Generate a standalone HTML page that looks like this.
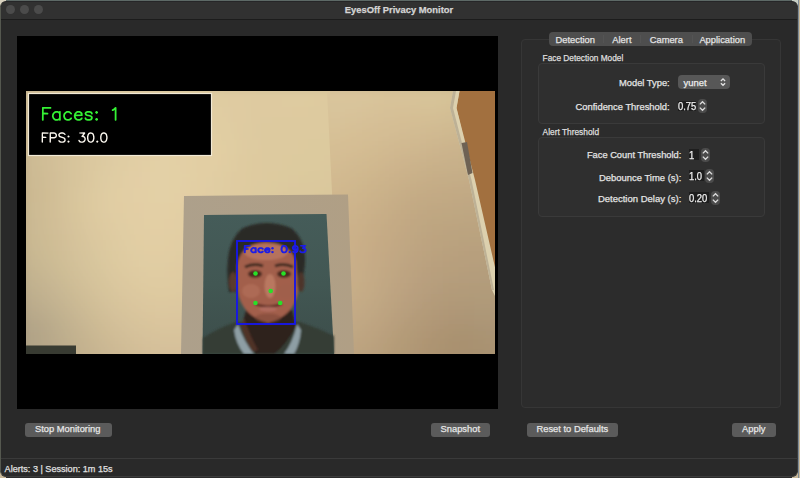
<!DOCTYPE html>
<html><head><meta charset="utf-8">
<style>
*{margin:0;padding:0;box-sizing:border-box}
html,body{width:800px;height:478px;overflow:hidden;background:#2b2b2b;font-family:"Liberation Sans",sans-serif;}
.abs{position:absolute}
.t{position:absolute;white-space:nowrap;line-height:normal;color:#e3e3e3;-webkit-text-stroke:0.25px currentColor}
.r{text-align:right}
#topline{position:absolute;left:0;top:0;width:800px;height:1px;background:#5d6966}
#rc1{position:absolute;left:798px;top:0;width:1px;height:478px;background:#7c8a96}
#rc2{position:absolute;left:799px;top:0;width:1px;height:478px;background:#c9b99a}
.corner{position:absolute;width:6px;height:6px;background:#d9d2bf}
#win{position:absolute;left:0;top:1px;width:798px;height:476px;background:#292929;border-radius:6px;overflow:hidden;border:1px solid #3c3c3c;border-top-color:#262628;border-left-color:#55584f}
#title{position:absolute;left:0;top:0;width:798px;height:18px;background:#313131;border-bottom:1px solid #1c1c1c}
.tl{position:absolute;top:3px;width:9px;height:9px;border-radius:50%;background:#4b4b4b}
#video{position:absolute;left:17px;top:36px;width:481px;height:373px;background:#000}
#cam{position:absolute;left:26px;top:91px;width:469px;height:263px}
.btn{position:absolute;height:14px;background:#5b5b5b;border-radius:3px}
#pane{position:absolute;left:521px;top:39px;width:260px;height:369px;border:1px solid #363636;background:#2c2c2c;border-radius:4px}
#seg{position:absolute;left:549px;top:32px;width:203px;height:14px;background:#4e4e4e;border-radius:4px}
.sep{position:absolute;top:3px;width:1px;height:8px;background:#545454}
.gbox{position:absolute;border:1px solid #3a3a3a;background:#2f2f2f;border-radius:4px}
.fld{position:absolute;background:#1e1e1e}
.spin{position:absolute;width:9px;height:14px;background:#4b4b4b;border-radius:4px}
.spin svg{position:absolute;left:0;top:0}
#status{position:absolute;left:1px;top:458px;width:797px;height:1px;background:#3a3a3a}
</style></head><body>
<div id="topline"></div><div id="rc1"></div><div id="rc2"></div>
<div class="corner" style="left:0;top:0"></div><div class="corner" style="left:792px;top:0;background:#c8cfc6"></div><div class="corner" style="left:0;top:472px;background:#c9b99a"></div><div class="corner" style="left:792px;top:472px;background:#c9b99a"></div>
<div id="win">
  <div id="title">
    <div class="tl" style="left:5px"></div>
    <div class="tl" style="left:19px"></div>
    <div class="tl" style="left:33px"></div>
  </div>
</div>
<div class="t" style="left:0;width:798px;text-align:center;top:3.6px;font-size:9.4px;font-weight:bold;color:#d4d4d4">EyesOff Privacy Monitor</div>
<div id="video"></div>
<svg id="cam" width="469" height="263" viewBox="26 91 469 263">
  <defs>
    <linearGradient id="mat" x1="182" y1="0" x2="353" y2="0" gradientUnits="userSpaceOnUse">
      <stop offset="0" stop-color="#ada08b"/>
      <stop offset="1" stop-color="#b09f85"/>
    </linearGradient>
    <linearGradient id="teal" x1="0" y1="214" x2="0" y2="354" gradientUnits="userSpaceOnUse">
      <stop offset="0" stop-color="#455c59"/>
      <stop offset="0.5" stop-color="#425753"/>
      <stop offset="1" stop-color="#3c4d4a"/>
    </linearGradient>
    <filter id="blw" x="-5%" y="-5%" width="110%" height="110%"><feGaussianBlur stdDeviation="9"/></filter>
    <filter id="bl1" x="-20%" y="-20%" width="140%" height="140%"><feGaussianBlur stdDeviation="1.3"/></filter>
  </defs>
  <clipPath id="clipL"><polygon points="26,91 330,91 343,354 26,354"/></clipPath>
  <clipPath id="clipR"><polygon points="327,91 495,91 495,354 340,354"/></clipPath>
  <g clip-path="url(#clipL)"><g filter="url(#blw)"><rect x="10" y="75" width="16" height="16" fill="#cebc96"/><rect x="26" y="75" width="16" height="16" fill="#d0be97"/><rect x="42" y="75" width="16" height="16" fill="#d2c099"/><rect x="58" y="75" width="16" height="16" fill="#d5c29b"/><rect x="74" y="75" width="16" height="16" fill="#d7c59d"/><rect x="90" y="75" width="16" height="16" fill="#d9c79e"/><rect x="106" y="75" width="16" height="16" fill="#dbc8a0"/><rect x="122" y="75" width="16" height="16" fill="#ddcaa1"/><rect x="138" y="75" width="16" height="16" fill="#decba2"/><rect x="154" y="75" width="16" height="16" fill="#dfcca2"/><rect x="170" y="75" width="16" height="16" fill="#dfcca2"/><rect x="186" y="75" width="16" height="16" fill="#dfcca2"/><rect x="202" y="75" width="16" height="16" fill="#dfcca2"/><rect x="218" y="75" width="16" height="16" fill="#dfcba1"/><rect x="234" y="75" width="16" height="16" fill="#dfcba1"/><rect x="250" y="75" width="16" height="16" fill="#decba0"/><rect x="266" y="75" width="16" height="16" fill="#decba0"/><rect x="282" y="75" width="16" height="16" fill="#decba0"/><rect x="298" y="75" width="16" height="16" fill="#decba0"/><rect x="314" y="75" width="16" height="16" fill="#deca9f"/><rect x="330" y="75" width="16" height="16" fill="#deca9f"/><rect x="346" y="75" width="16" height="16" fill="#ddca9f"/><rect x="362" y="75" width="16" height="16" fill="#ddc99e"/><rect x="378" y="75" width="16" height="16" fill="#dcc99e"/><rect x="394" y="75" width="16" height="16" fill="#dcc99e"/><rect x="410" y="75" width="16" height="16" fill="#dcc89d"/><rect x="426" y="75" width="16" height="16" fill="#dbc89d"/><rect x="442" y="75" width="16" height="16" fill="#dbc89d"/><rect x="458" y="75" width="16" height="16" fill="#dbc79d"/><rect x="474" y="75" width="16" height="16" fill="#dbc79c"/><rect x="490" y="75" width="16" height="16" fill="#dac79c"/><rect x="506" y="75" width="16" height="16" fill="#dac79c"/><rect x="10" y="91" width="16" height="16" fill="#cdbb95"/><rect x="26" y="91" width="16" height="16" fill="#cfbd97"/><rect x="42" y="91" width="16" height="16" fill="#d2c099"/><rect x="58" y="91" width="16" height="16" fill="#d5c29b"/><rect x="74" y="91" width="16" height="16" fill="#d7c59d"/><rect x="90" y="91" width="16" height="16" fill="#dac79f"/><rect x="106" y="91" width="16" height="16" fill="#dcc9a1"/><rect x="122" y="91" width="16" height="16" fill="#decba2"/><rect x="138" y="91" width="16" height="16" fill="#dfcca2"/><rect x="154" y="91" width="16" height="16" fill="#e0cda3"/><rect x="170" y="91" width="16" height="16" fill="#e0cda3"/><rect x="186" y="91" width="16" height="16" fill="#e0cda2"/><rect x="202" y="91" width="16" height="16" fill="#e0cca2"/><rect x="218" y="91" width="16" height="16" fill="#dfcca1"/><rect x="234" y="91" width="16" height="16" fill="#dfcba1"/><rect x="250" y="91" width="16" height="16" fill="#decaa0"/><rect x="266" y="91" width="16" height="16" fill="#decaa0"/><rect x="282" y="91" width="16" height="16" fill="#decba0"/><rect x="298" y="91" width="16" height="16" fill="#decba0"/><rect x="314" y="91" width="16" height="16" fill="#deca9f"/><rect x="330" y="91" width="16" height="16" fill="#ddca9f"/><rect x="346" y="91" width="16" height="16" fill="#ddca9e"/><rect x="362" y="91" width="16" height="16" fill="#ddc99e"/><rect x="378" y="91" width="16" height="16" fill="#dcc99e"/><rect x="394" y="91" width="16" height="16" fill="#dcc89d"/><rect x="410" y="91" width="16" height="16" fill="#dbc89d"/><rect x="426" y="91" width="16" height="16" fill="#dbc89d"/><rect x="442" y="91" width="16" height="16" fill="#dbc79d"/><rect x="458" y="91" width="16" height="16" fill="#dbc79c"/><rect x="474" y="91" width="16" height="16" fill="#dac79c"/><rect x="490" y="91" width="16" height="16" fill="#dac79c"/><rect x="506" y="91" width="16" height="16" fill="#dac69c"/><rect x="10" y="107" width="16" height="16" fill="#ccba94"/><rect x="26" y="107" width="16" height="16" fill="#cfbc96"/><rect x="42" y="107" width="16" height="16" fill="#d2bf98"/><rect x="58" y="107" width="16" height="16" fill="#d5c29b"/><rect x="74" y="107" width="16" height="16" fill="#d8c59d"/><rect x="90" y="107" width="16" height="16" fill="#dbc89f"/><rect x="106" y="107" width="16" height="16" fill="#ddcaa2"/><rect x="122" y="107" width="16" height="16" fill="#dfcca3"/><rect x="138" y="107" width="16" height="16" fill="#e0cda3"/><rect x="154" y="107" width="16" height="16" fill="#e0cda4"/><rect x="170" y="107" width="16" height="16" fill="#e1cea3"/><rect x="186" y="107" width="16" height="16" fill="#e1cea3"/><rect x="202" y="107" width="16" height="16" fill="#e0cda2"/><rect x="218" y="107" width="16" height="16" fill="#e0cca2"/><rect x="234" y="107" width="16" height="16" fill="#dfcba1"/><rect x="250" y="107" width="16" height="16" fill="#decaa0"/><rect x="266" y="107" width="16" height="16" fill="#decaa0"/><rect x="282" y="107" width="16" height="16" fill="#decaa0"/><rect x="298" y="107" width="16" height="16" fill="#deca9f"/><rect x="314" y="107" width="16" height="16" fill="#ddca9f"/><rect x="330" y="107" width="16" height="16" fill="#ddca9f"/><rect x="346" y="107" width="16" height="16" fill="#ddc99e"/><rect x="362" y="107" width="16" height="16" fill="#dcc99e"/><rect x="378" y="107" width="16" height="16" fill="#dcc99d"/><rect x="394" y="107" width="16" height="16" fill="#dbc89d"/><rect x="410" y="107" width="16" height="16" fill="#dbc89d"/><rect x="426" y="107" width="16" height="16" fill="#dbc79c"/><rect x="442" y="107" width="16" height="16" fill="#dac79c"/><rect x="458" y="107" width="16" height="16" fill="#dac79c"/><rect x="474" y="107" width="16" height="16" fill="#dac69c"/><rect x="490" y="107" width="16" height="16" fill="#dac69c"/><rect x="506" y="107" width="16" height="16" fill="#d9c69b"/><rect x="10" y="123" width="16" height="16" fill="#ccba94"/><rect x="26" y="123" width="16" height="16" fill="#cebc95"/><rect x="42" y="123" width="16" height="16" fill="#d1bf98"/><rect x="58" y="123" width="16" height="16" fill="#d5c29a"/><rect x="74" y="123" width="16" height="16" fill="#d8c59d"/><rect x="90" y="123" width="16" height="16" fill="#dbc8a0"/><rect x="106" y="123" width="16" height="16" fill="#decba2"/><rect x="122" y="123" width="16" height="16" fill="#e0cda3"/><rect x="138" y="123" width="16" height="16" fill="#e1cea4"/><rect x="154" y="123" width="16" height="16" fill="#e1cea4"/><rect x="170" y="123" width="16" height="16" fill="#e2cea4"/><rect x="186" y="123" width="16" height="16" fill="#e1cea4"/><rect x="202" y="123" width="16" height="16" fill="#e1cea3"/><rect x="218" y="123" width="16" height="16" fill="#e0cda2"/><rect x="234" y="123" width="16" height="16" fill="#dfcba1"/><rect x="250" y="123" width="16" height="16" fill="#ddcaa0"/><rect x="266" y="123" width="16" height="16" fill="#ddca9f"/><rect x="282" y="123" width="16" height="16" fill="#ddca9f"/><rect x="298" y="123" width="16" height="16" fill="#ddca9f"/><rect x="314" y="123" width="16" height="16" fill="#ddca9f"/><rect x="330" y="123" width="16" height="16" fill="#ddca9e"/><rect x="346" y="123" width="16" height="16" fill="#dcc99e"/><rect x="362" y="123" width="16" height="16" fill="#dcc99d"/><rect x="378" y="123" width="16" height="16" fill="#dbc89d"/><rect x="394" y="123" width="16" height="16" fill="#dbc89d"/><rect x="410" y="123" width="16" height="16" fill="#dac79c"/><rect x="426" y="123" width="16" height="16" fill="#dac79c"/><rect x="442" y="123" width="16" height="16" fill="#dac79c"/><rect x="458" y="123" width="16" height="16" fill="#dac69c"/><rect x="474" y="123" width="16" height="16" fill="#d9c69b"/><rect x="490" y="123" width="16" height="16" fill="#d9c69b"/><rect x="506" y="123" width="16" height="16" fill="#d9c59b"/><rect x="10" y="139" width="16" height="16" fill="#cbb993"/><rect x="26" y="139" width="16" height="16" fill="#cebb95"/><rect x="42" y="139" width="16" height="16" fill="#d1bf97"/><rect x="58" y="139" width="16" height="16" fill="#d5c29a"/><rect x="74" y="139" width="16" height="16" fill="#d8c59d"/><rect x="90" y="139" width="16" height="16" fill="#dcc9a0"/><rect x="106" y="139" width="16" height="16" fill="#decba2"/><rect x="122" y="139" width="16" height="16" fill="#e0cda4"/><rect x="138" y="139" width="16" height="16" fill="#e1cea5"/><rect x="154" y="139" width="16" height="16" fill="#e2cfa5"/><rect x="170" y="139" width="16" height="16" fill="#e2cfa5"/><rect x="186" y="139" width="16" height="16" fill="#e2cfa4"/><rect x="202" y="139" width="16" height="16" fill="#e2cfa3"/><rect x="218" y="139" width="16" height="16" fill="#e1cea2"/><rect x="234" y="139" width="16" height="16" fill="#dfcca1"/><rect x="250" y="139" width="16" height="16" fill="#decaa0"/><rect x="266" y="139" width="16" height="16" fill="#ddca9f"/><rect x="282" y="139" width="16" height="16" fill="#ddca9f"/><rect x="298" y="139" width="16" height="16" fill="#ddca9e"/><rect x="314" y="139" width="16" height="16" fill="#dcca9e"/><rect x="330" y="139" width="16" height="16" fill="#dcc99e"/><rect x="346" y="139" width="16" height="16" fill="#dbc99d"/><rect x="362" y="139" width="16" height="16" fill="#dbc89d"/><rect x="378" y="139" width="16" height="16" fill="#dbc89c"/><rect x="394" y="139" width="16" height="16" fill="#dac79c"/><rect x="410" y="139" width="16" height="16" fill="#dac79c"/><rect x="426" y="139" width="16" height="16" fill="#dac69c"/><rect x="442" y="139" width="16" height="16" fill="#d9c69b"/><rect x="458" y="139" width="16" height="16" fill="#d9c69b"/><rect x="474" y="139" width="16" height="16" fill="#d9c59b"/><rect x="490" y="139" width="16" height="16" fill="#d9c59b"/><rect x="506" y="139" width="16" height="16" fill="#d9c59b"/><rect x="10" y="155" width="16" height="16" fill="#cab892"/><rect x="26" y="155" width="16" height="16" fill="#cdbb94"/><rect x="42" y="155" width="16" height="16" fill="#d1be97"/><rect x="58" y="155" width="16" height="16" fill="#d5c29a"/><rect x="74" y="155" width="16" height="16" fill="#d9c69d"/><rect x="90" y="155" width="16" height="16" fill="#dcc9a0"/><rect x="106" y="155" width="16" height="16" fill="#dfcca3"/><rect x="122" y="155" width="16" height="16" fill="#e1cea4"/><rect x="138" y="155" width="16" height="16" fill="#e2cfa5"/><rect x="154" y="155" width="16" height="16" fill="#e3d0a6"/><rect x="170" y="155" width="16" height="16" fill="#e3cfa5"/><rect x="186" y="155" width="16" height="16" fill="#e2cfa4"/><rect x="202" y="155" width="16" height="16" fill="#e2cea3"/><rect x="218" y="155" width="16" height="16" fill="#e1cda2"/><rect x="234" y="155" width="16" height="16" fill="#dfcba0"/><rect x="250" y="155" width="16" height="16" fill="#deca9f"/><rect x="266" y="155" width="16" height="16" fill="#ddca9f"/><rect x="282" y="155" width="16" height="16" fill="#ddca9e"/><rect x="298" y="155" width="16" height="16" fill="#dcca9e"/><rect x="314" y="155" width="16" height="16" fill="#dcc99e"/><rect x="330" y="155" width="16" height="16" fill="#dbc99d"/><rect x="346" y="155" width="16" height="16" fill="#dbc89d"/><rect x="362" y="155" width="16" height="16" fill="#dac79c"/><rect x="378" y="155" width="16" height="16" fill="#dac79c"/><rect x="394" y="155" width="16" height="16" fill="#dac69c"/><rect x="410" y="155" width="16" height="16" fill="#d9c69b"/><rect x="426" y="155" width="16" height="16" fill="#d9c69b"/><rect x="442" y="155" width="16" height="16" fill="#d9c59b"/><rect x="458" y="155" width="16" height="16" fill="#d9c59b"/><rect x="474" y="155" width="16" height="16" fill="#d8c59b"/><rect x="490" y="155" width="16" height="16" fill="#d8c59a"/><rect x="506" y="155" width="16" height="16" fill="#d8c49a"/><rect x="10" y="171" width="16" height="16" fill="#cab791"/><rect x="26" y="171" width="16" height="16" fill="#ccba93"/><rect x="42" y="171" width="16" height="16" fill="#d0bd96"/><rect x="58" y="171" width="16" height="16" fill="#d5c29a"/><rect x="74" y="171" width="16" height="16" fill="#d9c69d"/><rect x="90" y="171" width="16" height="16" fill="#ddcaa1"/><rect x="106" y="171" width="16" height="16" fill="#e0cda3"/><rect x="122" y="171" width="16" height="16" fill="#e2cea5"/><rect x="138" y="171" width="16" height="16" fill="#e3cfa6"/><rect x="154" y="171" width="16" height="16" fill="#e3d0a6"/><rect x="170" y="171" width="16" height="16" fill="#e3d0a5"/><rect x="186" y="171" width="16" height="16" fill="#e2cfa4"/><rect x="202" y="171" width="16" height="16" fill="#e1cea3"/><rect x="218" y="171" width="16" height="16" fill="#e0cca1"/><rect x="234" y="171" width="16" height="16" fill="#dfcba0"/><rect x="250" y="171" width="16" height="16" fill="#deca9f"/><rect x="266" y="171" width="16" height="16" fill="#ddca9e"/><rect x="282" y="171" width="16" height="16" fill="#dcc99e"/><rect x="298" y="171" width="16" height="16" fill="#dbc99d"/><rect x="314" y="171" width="16" height="16" fill="#dbc99d"/><rect x="330" y="171" width="16" height="16" fill="#dac89c"/><rect x="346" y="171" width="16" height="16" fill="#dac79c"/><rect x="362" y="171" width="16" height="16" fill="#dac79c"/><rect x="378" y="171" width="16" height="16" fill="#d9c69b"/><rect x="394" y="171" width="16" height="16" fill="#d9c69b"/><rect x="410" y="171" width="16" height="16" fill="#d9c59b"/><rect x="426" y="171" width="16" height="16" fill="#d8c59b"/><rect x="442" y="171" width="16" height="16" fill="#d8c59a"/><rect x="458" y="171" width="16" height="16" fill="#d8c49a"/><rect x="474" y="171" width="16" height="16" fill="#d8c49a"/><rect x="490" y="171" width="16" height="16" fill="#d8c49a"/><rect x="506" y="171" width="16" height="16" fill="#d8c49a"/><rect x="10" y="187" width="16" height="16" fill="#c9b791"/><rect x="26" y="187" width="16" height="16" fill="#ccb992"/><rect x="42" y="187" width="16" height="16" fill="#d0bd95"/><rect x="58" y="187" width="16" height="16" fill="#d5c29a"/><rect x="74" y="187" width="16" height="16" fill="#dac79e"/><rect x="90" y="187" width="16" height="16" fill="#decba1"/><rect x="106" y="187" width="16" height="16" fill="#e1cda3"/><rect x="122" y="187" width="16" height="16" fill="#e2cfa5"/><rect x="138" y="187" width="16" height="16" fill="#e3cfa5"/><rect x="154" y="187" width="16" height="16" fill="#e3d0a6"/><rect x="170" y="187" width="16" height="16" fill="#e3cfa5"/><rect x="186" y="187" width="16" height="16" fill="#e2cea4"/><rect x="202" y="187" width="16" height="16" fill="#e1cda3"/><rect x="218" y="187" width="16" height="16" fill="#e0cca1"/><rect x="234" y="187" width="16" height="16" fill="#dfcba0"/><rect x="250" y="187" width="16" height="16" fill="#ddca9f"/><rect x="266" y="187" width="16" height="16" fill="#dcc99e"/><rect x="282" y="187" width="16" height="16" fill="#dbc89d"/><rect x="298" y="187" width="16" height="16" fill="#dbc89d"/><rect x="314" y="187" width="16" height="16" fill="#dac79c"/><rect x="330" y="187" width="16" height="16" fill="#d9c79c"/><rect x="346" y="187" width="16" height="16" fill="#d9c69b"/><rect x="362" y="187" width="16" height="16" fill="#d9c69b"/><rect x="378" y="187" width="16" height="16" fill="#d8c59b"/><rect x="394" y="187" width="16" height="16" fill="#d8c59a"/><rect x="410" y="187" width="16" height="16" fill="#d8c59a"/><rect x="426" y="187" width="16" height="16" fill="#d8c49a"/><rect x="442" y="187" width="16" height="16" fill="#d8c49a"/><rect x="458" y="187" width="16" height="16" fill="#d7c49a"/><rect x="474" y="187" width="16" height="16" fill="#d7c49a"/><rect x="490" y="187" width="16" height="16" fill="#d7c39a"/><rect x="506" y="187" width="16" height="16" fill="#d7c39a"/><rect x="10" y="203" width="16" height="16" fill="#c8b791"/><rect x="26" y="203" width="16" height="16" fill="#ccba93"/><rect x="42" y="203" width="16" height="16" fill="#d0bd96"/><rect x="58" y="203" width="16" height="16" fill="#d5c299"/><rect x="74" y="203" width="16" height="16" fill="#dac79d"/><rect x="90" y="203" width="16" height="16" fill="#decba1"/><rect x="106" y="203" width="16" height="16" fill="#e1cda3"/><rect x="122" y="203" width="16" height="16" fill="#e2cea4"/><rect x="138" y="203" width="16" height="16" fill="#e3cfa5"/><rect x="154" y="203" width="16" height="16" fill="#e3cfa5"/><rect x="170" y="203" width="16" height="16" fill="#e2cfa4"/><rect x="186" y="203" width="16" height="16" fill="#e2cea3"/><rect x="202" y="203" width="16" height="16" fill="#e1cda2"/><rect x="218" y="203" width="16" height="16" fill="#dfcba1"/><rect x="234" y="203" width="16" height="16" fill="#decaa0"/><rect x="250" y="203" width="16" height="16" fill="#dcc99e"/><rect x="266" y="203" width="16" height="16" fill="#dbc89d"/><rect x="282" y="203" width="16" height="16" fill="#dac79d"/><rect x="298" y="203" width="16" height="16" fill="#dac69c"/><rect x="314" y="203" width="16" height="16" fill="#d9c69b"/><rect x="330" y="203" width="16" height="16" fill="#d8c59b"/><rect x="346" y="203" width="16" height="16" fill="#d8c59b"/><rect x="362" y="203" width="16" height="16" fill="#d8c59a"/><rect x="378" y="203" width="16" height="16" fill="#d8c49a"/><rect x="394" y="203" width="16" height="16" fill="#d7c49a"/><rect x="410" y="203" width="16" height="16" fill="#d7c49a"/><rect x="426" y="203" width="16" height="16" fill="#d7c39a"/><rect x="442" y="203" width="16" height="16" fill="#d7c399"/><rect x="458" y="203" width="16" height="16" fill="#d7c399"/><rect x="474" y="203" width="16" height="16" fill="#d7c399"/><rect x="490" y="203" width="16" height="16" fill="#d7c399"/><rect x="506" y="203" width="16" height="16" fill="#d7c399"/><rect x="10" y="219" width="16" height="16" fill="#c8b690"/><rect x="26" y="219" width="16" height="16" fill="#cbb993"/><rect x="42" y="219" width="16" height="16" fill="#d0bd96"/><rect x="58" y="219" width="16" height="16" fill="#d4c199"/><rect x="74" y="219" width="16" height="16" fill="#d9c69d"/><rect x="90" y="219" width="16" height="16" fill="#ddc9a0"/><rect x="106" y="219" width="16" height="16" fill="#e0cca2"/><rect x="122" y="219" width="16" height="16" fill="#e1cea4"/><rect x="138" y="219" width="16" height="16" fill="#e2cfa4"/><rect x="154" y="219" width="16" height="16" fill="#e3cfa4"/><rect x="170" y="219" width="16" height="16" fill="#e2cea4"/><rect x="186" y="219" width="16" height="16" fill="#e1cda3"/><rect x="202" y="219" width="16" height="16" fill="#e0cca2"/><rect x="218" y="219" width="16" height="16" fill="#decaa0"/><rect x="234" y="219" width="16" height="16" fill="#ddc99f"/><rect x="250" y="219" width="16" height="16" fill="#dbc79e"/><rect x="266" y="219" width="16" height="16" fill="#dac69d"/><rect x="282" y="219" width="16" height="16" fill="#d9c59c"/><rect x="298" y="219" width="16" height="16" fill="#d8c59b"/><rect x="314" y="219" width="16" height="16" fill="#d8c49a"/><rect x="330" y="219" width="16" height="16" fill="#d7c49a"/><rect x="346" y="219" width="16" height="16" fill="#d7c49a"/><rect x="362" y="219" width="16" height="16" fill="#d7c399"/><rect x="378" y="219" width="16" height="16" fill="#d7c399"/><rect x="394" y="219" width="16" height="16" fill="#d6c399"/><rect x="410" y="219" width="16" height="16" fill="#d6c399"/><rect x="426" y="219" width="16" height="16" fill="#d6c399"/><rect x="442" y="219" width="16" height="16" fill="#d6c299"/><rect x="458" y="219" width="16" height="16" fill="#d6c299"/><rect x="474" y="219" width="16" height="16" fill="#d6c299"/><rect x="490" y="219" width="16" height="16" fill="#d6c299"/><rect x="506" y="219" width="16" height="16" fill="#d6c299"/><rect x="10" y="235" width="16" height="16" fill="#c6b590"/><rect x="26" y="235" width="16" height="16" fill="#cab992"/><rect x="42" y="235" width="16" height="16" fill="#cebc95"/><rect x="58" y="235" width="16" height="16" fill="#d3c098"/><rect x="74" y="235" width="16" height="16" fill="#d7c49c"/><rect x="90" y="235" width="16" height="16" fill="#dbc89f"/><rect x="106" y="235" width="16" height="16" fill="#decba1"/><rect x="122" y="235" width="16" height="16" fill="#e1cda3"/><rect x="138" y="235" width="16" height="16" fill="#e2cea4"/><rect x="154" y="235" width="16" height="16" fill="#e2cea4"/><rect x="170" y="235" width="16" height="16" fill="#e1cda3"/><rect x="186" y="235" width="16" height="16" fill="#e0cca2"/><rect x="202" y="235" width="16" height="16" fill="#dfcba1"/><rect x="218" y="235" width="16" height="16" fill="#ddc9a0"/><rect x="234" y="235" width="16" height="16" fill="#dcc79e"/><rect x="250" y="235" width="16" height="16" fill="#dac69d"/><rect x="266" y="235" width="16" height="16" fill="#d9c59c"/><rect x="282" y="235" width="16" height="16" fill="#d8c49b"/><rect x="298" y="235" width="16" height="16" fill="#d7c39a"/><rect x="314" y="235" width="16" height="16" fill="#d6c399"/><rect x="330" y="235" width="16" height="16" fill="#d6c299"/><rect x="346" y="235" width="16" height="16" fill="#d6c299"/><rect x="362" y="235" width="16" height="16" fill="#d6c299"/><rect x="378" y="235" width="16" height="16" fill="#d6c299"/><rect x="394" y="235" width="16" height="16" fill="#d6c298"/><rect x="410" y="235" width="16" height="16" fill="#d6c298"/><rect x="426" y="235" width="16" height="16" fill="#d5c298"/><rect x="442" y="235" width="16" height="16" fill="#d5c298"/><rect x="458" y="235" width="16" height="16" fill="#d5c298"/><rect x="474" y="235" width="16" height="16" fill="#d5c198"/><rect x="490" y="235" width="16" height="16" fill="#d5c198"/><rect x="506" y="235" width="16" height="16" fill="#d5c198"/><rect x="10" y="251" width="16" height="16" fill="#c4b38f"/><rect x="26" y="251" width="16" height="16" fill="#c8b791"/><rect x="42" y="251" width="16" height="16" fill="#ccbb94"/><rect x="58" y="251" width="16" height="16" fill="#d1bf97"/><rect x="74" y="251" width="16" height="16" fill="#d5c39b"/><rect x="90" y="251" width="16" height="16" fill="#d9c79e"/><rect x="106" y="251" width="16" height="16" fill="#ddcaa0"/><rect x="122" y="251" width="16" height="16" fill="#e0cca2"/><rect x="138" y="251" width="16" height="16" fill="#e1cea3"/><rect x="154" y="251" width="16" height="16" fill="#e1cda3"/><rect x="170" y="251" width="16" height="16" fill="#e1cca2"/><rect x="186" y="251" width="16" height="16" fill="#dfcba1"/><rect x="202" y="251" width="16" height="16" fill="#decaa0"/><rect x="218" y="251" width="16" height="16" fill="#dcc89f"/><rect x="234" y="251" width="16" height="16" fill="#dac69d"/><rect x="250" y="251" width="16" height="16" fill="#d8c49c"/><rect x="266" y="251" width="16" height="16" fill="#d7c39b"/><rect x="282" y="251" width="16" height="16" fill="#d6c299"/><rect x="298" y="251" width="16" height="16" fill="#d5c199"/><rect x="314" y="251" width="16" height="16" fill="#d5c198"/><rect x="330" y="251" width="16" height="16" fill="#d5c198"/><rect x="346" y="251" width="16" height="16" fill="#d5c198"/><rect x="362" y="251" width="16" height="16" fill="#d5c198"/><rect x="378" y="251" width="16" height="16" fill="#d5c198"/><rect x="394" y="251" width="16" height="16" fill="#d5c198"/><rect x="410" y="251" width="16" height="16" fill="#d5c198"/><rect x="426" y="251" width="16" height="16" fill="#d5c198"/><rect x="442" y="251" width="16" height="16" fill="#d5c198"/><rect x="458" y="251" width="16" height="16" fill="#d5c198"/><rect x="474" y="251" width="16" height="16" fill="#d5c198"/><rect x="490" y="251" width="16" height="16" fill="#d5c198"/><rect x="506" y="251" width="16" height="16" fill="#d5c198"/><rect x="10" y="267" width="16" height="16" fill="#c0b08e"/><rect x="26" y="267" width="16" height="16" fill="#c4b490"/><rect x="42" y="267" width="16" height="16" fill="#c9b893"/><rect x="58" y="267" width="16" height="16" fill="#cebd96"/><rect x="74" y="267" width="16" height="16" fill="#d3c199"/><rect x="90" y="267" width="16" height="16" fill="#d7c59c"/><rect x="106" y="267" width="16" height="16" fill="#dbc89f"/><rect x="122" y="267" width="16" height="16" fill="#decaa1"/><rect x="138" y="267" width="16" height="16" fill="#e0cca2"/><rect x="154" y="267" width="16" height="16" fill="#e0cca2"/><rect x="170" y="267" width="16" height="16" fill="#e0cba1"/><rect x="186" y="267" width="16" height="16" fill="#decaa0"/><rect x="202" y="267" width="16" height="16" fill="#ddc89f"/><rect x="218" y="267" width="16" height="16" fill="#dbc69e"/><rect x="234" y="267" width="16" height="16" fill="#d9c59c"/><rect x="250" y="267" width="16" height="16" fill="#d7c39b"/><rect x="266" y="267" width="16" height="16" fill="#d6c199"/><rect x="282" y="267" width="16" height="16" fill="#d5c098"/><rect x="298" y="267" width="16" height="16" fill="#d4bf97"/><rect x="314" y="267" width="16" height="16" fill="#d4bf97"/><rect x="330" y="267" width="16" height="16" fill="#d4bf97"/><rect x="346" y="267" width="16" height="16" fill="#d4bf97"/><rect x="362" y="267" width="16" height="16" fill="#d4bf97"/><rect x="378" y="267" width="16" height="16" fill="#d4bf97"/><rect x="394" y="267" width="16" height="16" fill="#d4c097"/><rect x="410" y="267" width="16" height="16" fill="#d4c097"/><rect x="426" y="267" width="16" height="16" fill="#d4c097"/><rect x="442" y="267" width="16" height="16" fill="#d4c097"/><rect x="458" y="267" width="16" height="16" fill="#d4c097"/><rect x="474" y="267" width="16" height="16" fill="#d4c097"/><rect x="490" y="267" width="16" height="16" fill="#d4c097"/><rect x="506" y="267" width="16" height="16" fill="#d4c097"/><rect x="10" y="283" width="16" height="16" fill="#bcad8c"/><rect x="26" y="283" width="16" height="16" fill="#c0b08e"/><rect x="42" y="283" width="16" height="16" fill="#c5b491"/><rect x="58" y="283" width="16" height="16" fill="#cab994"/><rect x="74" y="283" width="16" height="16" fill="#d0be97"/><rect x="90" y="283" width="16" height="16" fill="#d5c29a"/><rect x="106" y="283" width="16" height="16" fill="#d9c69d"/><rect x="122" y="283" width="16" height="16" fill="#dcc89f"/><rect x="138" y="283" width="16" height="16" fill="#decaa0"/><rect x="154" y="283" width="16" height="16" fill="#dfcaa0"/><rect x="170" y="283" width="16" height="16" fill="#decaa0"/><rect x="186" y="283" width="16" height="16" fill="#ddc89f"/><rect x="202" y="283" width="16" height="16" fill="#dcc79e"/><rect x="218" y="283" width="16" height="16" fill="#dac59d"/><rect x="234" y="283" width="16" height="16" fill="#d8c39b"/><rect x="250" y="283" width="16" height="16" fill="#d6c19a"/><rect x="266" y="283" width="16" height="16" fill="#d5bf98"/><rect x="282" y="283" width="16" height="16" fill="#d3be97"/><rect x="298" y="283" width="16" height="16" fill="#d2bd96"/><rect x="314" y="283" width="16" height="16" fill="#d2bd96"/><rect x="330" y="283" width="16" height="16" fill="#d2bd96"/><rect x="346" y="283" width="16" height="16" fill="#d3be96"/><rect x="362" y="283" width="16" height="16" fill="#d3be96"/><rect x="378" y="283" width="16" height="16" fill="#d3be96"/><rect x="394" y="283" width="16" height="16" fill="#d3bf97"/><rect x="410" y="283" width="16" height="16" fill="#d3bf97"/><rect x="426" y="283" width="16" height="16" fill="#d3bf97"/><rect x="442" y="283" width="16" height="16" fill="#d3bf97"/><rect x="458" y="283" width="16" height="16" fill="#d3bf97"/><rect x="474" y="283" width="16" height="16" fill="#d3bf97"/><rect x="490" y="283" width="16" height="16" fill="#d4bf97"/><rect x="506" y="283" width="16" height="16" fill="#d4bf97"/><rect x="10" y="299" width="16" height="16" fill="#b8a98a"/><rect x="26" y="299" width="16" height="16" fill="#bbab8c"/><rect x="42" y="299" width="16" height="16" fill="#c0b08f"/><rect x="58" y="299" width="16" height="16" fill="#c6b591"/><rect x="74" y="299" width="16" height="16" fill="#ccba95"/><rect x="90" y="299" width="16" height="16" fill="#d1bf98"/><rect x="106" y="299" width="16" height="16" fill="#d6c39b"/><rect x="122" y="299" width="16" height="16" fill="#dac59d"/><rect x="138" y="299" width="16" height="16" fill="#dbc79e"/><rect x="154" y="299" width="16" height="16" fill="#ddc89f"/><rect x="170" y="299" width="16" height="16" fill="#dcc79f"/><rect x="186" y="299" width="16" height="16" fill="#dbc69e"/><rect x="202" y="299" width="16" height="16" fill="#dac59d"/><rect x="218" y="299" width="16" height="16" fill="#d8c39b"/><rect x="234" y="299" width="16" height="16" fill="#d7c29a"/><rect x="250" y="299" width="16" height="16" fill="#d5c099"/><rect x="266" y="299" width="16" height="16" fill="#d3be97"/><rect x="282" y="299" width="16" height="16" fill="#d2bc96"/><rect x="298" y="299" width="16" height="16" fill="#d1bc95"/><rect x="314" y="299" width="16" height="16" fill="#d1bc95"/><rect x="330" y="299" width="16" height="16" fill="#d1bc95"/><rect x="346" y="299" width="16" height="16" fill="#d2bd96"/><rect x="362" y="299" width="16" height="16" fill="#d2bd96"/><rect x="378" y="299" width="16" height="16" fill="#d2bd96"/><rect x="394" y="299" width="16" height="16" fill="#d2be96"/><rect x="410" y="299" width="16" height="16" fill="#d2be96"/><rect x="426" y="299" width="16" height="16" fill="#d3be96"/><rect x="442" y="299" width="16" height="16" fill="#d3be96"/><rect x="458" y="299" width="16" height="16" fill="#d3be96"/><rect x="474" y="299" width="16" height="16" fill="#d3be96"/><rect x="490" y="299" width="16" height="16" fill="#d3bf97"/><rect x="506" y="299" width="16" height="16" fill="#d3bf97"/><rect x="10" y="315" width="16" height="16" fill="#b3a588"/><rect x="26" y="315" width="16" height="16" fill="#b4a588"/><rect x="42" y="315" width="16" height="16" fill="#baab8b"/><rect x="58" y="315" width="16" height="16" fill="#c1b18f"/><rect x="74" y="315" width="16" height="16" fill="#c8b692"/><rect x="90" y="315" width="16" height="16" fill="#cebb95"/><rect x="106" y="315" width="16" height="16" fill="#d3bf98"/><rect x="122" y="315" width="16" height="16" fill="#d6c29b"/><rect x="138" y="315" width="16" height="16" fill="#d9c49c"/><rect x="154" y="315" width="16" height="16" fill="#dac59d"/><rect x="170" y="315" width="16" height="16" fill="#dac59d"/><rect x="186" y="315" width="16" height="16" fill="#d9c49c"/><rect x="202" y="315" width="16" height="16" fill="#d8c39b"/><rect x="218" y="315" width="16" height="16" fill="#d7c29a"/><rect x="234" y="315" width="16" height="16" fill="#d5c099"/><rect x="250" y="315" width="16" height="16" fill="#d4bf98"/><rect x="266" y="315" width="16" height="16" fill="#d3bd97"/><rect x="282" y="315" width="16" height="16" fill="#d2bc96"/><rect x="298" y="315" width="16" height="16" fill="#d1bb95"/><rect x="314" y="315" width="16" height="16" fill="#d1bb95"/><rect x="330" y="315" width="16" height="16" fill="#d1bc95"/><rect x="346" y="315" width="16" height="16" fill="#d1bc95"/><rect x="362" y="315" width="16" height="16" fill="#d1bc95"/><rect x="378" y="315" width="16" height="16" fill="#d1bd95"/><rect x="394" y="315" width="16" height="16" fill="#d1bd95"/><rect x="410" y="315" width="16" height="16" fill="#d2bd96"/><rect x="426" y="315" width="16" height="16" fill="#d2bd96"/><rect x="442" y="315" width="16" height="16" fill="#d2bd96"/><rect x="458" y="315" width="16" height="16" fill="#d2be96"/><rect x="474" y="315" width="16" height="16" fill="#d2be96"/><rect x="490" y="315" width="16" height="16" fill="#d2be96"/><rect x="506" y="315" width="16" height="16" fill="#d2be96"/><rect x="10" y="331" width="16" height="16" fill="#b1a387"/><rect x="26" y="331" width="16" height="16" fill="#b1a387"/><rect x="42" y="331" width="16" height="16" fill="#b7a88a"/><rect x="58" y="331" width="16" height="16" fill="#beae8d"/><rect x="74" y="331" width="16" height="16" fill="#c5b38f"/><rect x="90" y="331" width="16" height="16" fill="#cab792"/><rect x="106" y="331" width="16" height="16" fill="#cfbb96"/><rect x="122" y="331" width="16" height="16" fill="#d3bf98"/><rect x="138" y="331" width="16" height="16" fill="#d6c19a"/><rect x="154" y="331" width="16" height="16" fill="#d7c29b"/><rect x="170" y="331" width="16" height="16" fill="#d7c29b"/><rect x="186" y="331" width="16" height="16" fill="#d7c29b"/><rect x="202" y="331" width="16" height="16" fill="#d6c19a"/><rect x="218" y="331" width="16" height="16" fill="#d5c099"/><rect x="234" y="331" width="16" height="16" fill="#d4bf98"/><rect x="250" y="331" width="16" height="16" fill="#d3be97"/><rect x="266" y="331" width="16" height="16" fill="#d2bc96"/><rect x="282" y="331" width="16" height="16" fill="#d1bc95"/><rect x="298" y="331" width="16" height="16" fill="#d0bb95"/><rect x="314" y="331" width="16" height="16" fill="#d0bb95"/><rect x="330" y="331" width="16" height="16" fill="#d0bb95"/><rect x="346" y="331" width="16" height="16" fill="#d0bb95"/><rect x="362" y="331" width="16" height="16" fill="#d0bb95"/><rect x="378" y="331" width="16" height="16" fill="#d1bc95"/><rect x="394" y="331" width="16" height="16" fill="#d1bc95"/><rect x="410" y="331" width="16" height="16" fill="#d1bc95"/><rect x="426" y="331" width="16" height="16" fill="#d1bd95"/><rect x="442" y="331" width="16" height="16" fill="#d1bd95"/><rect x="458" y="331" width="16" height="16" fill="#d1bd95"/><rect x="474" y="331" width="16" height="16" fill="#d2bd96"/><rect x="490" y="331" width="16" height="16" fill="#d2bd96"/><rect x="506" y="331" width="16" height="16" fill="#d2bd96"/><rect x="10" y="347" width="16" height="16" fill="#b1a387"/><rect x="26" y="347" width="16" height="16" fill="#b3a487"/><rect x="42" y="347" width="16" height="16" fill="#b7a889"/><rect x="58" y="347" width="16" height="16" fill="#bdac8c"/><rect x="74" y="347" width="16" height="16" fill="#c2b18e"/><rect x="90" y="347" width="16" height="16" fill="#c7b591"/><rect x="106" y="347" width="16" height="16" fill="#ccb894"/><rect x="122" y="347" width="16" height="16" fill="#d0bb96"/><rect x="138" y="347" width="16" height="16" fill="#d3be98"/><rect x="154" y="347" width="16" height="16" fill="#d4bf99"/><rect x="170" y="347" width="16" height="16" fill="#d5bf99"/><rect x="186" y="347" width="16" height="16" fill="#d5bf99"/><rect x="202" y="347" width="16" height="16" fill="#d4bf99"/><rect x="218" y="347" width="16" height="16" fill="#d4be98"/><rect x="234" y="347" width="16" height="16" fill="#d3bd97"/><rect x="250" y="347" width="16" height="16" fill="#d2bc96"/><rect x="266" y="347" width="16" height="16" fill="#d1bc96"/><rect x="282" y="347" width="16" height="16" fill="#d0bb95"/><rect x="298" y="347" width="16" height="16" fill="#d0bb95"/><rect x="314" y="347" width="16" height="16" fill="#d0ba94"/><rect x="330" y="347" width="16" height="16" fill="#d0ba94"/><rect x="346" y="347" width="16" height="16" fill="#d0bb94"/><rect x="362" y="347" width="16" height="16" fill="#d0bb94"/><rect x="378" y="347" width="16" height="16" fill="#d0bb94"/><rect x="394" y="347" width="16" height="16" fill="#d0bb95"/><rect x="410" y="347" width="16" height="16" fill="#d0bc95"/><rect x="426" y="347" width="16" height="16" fill="#d1bc95"/><rect x="442" y="347" width="16" height="16" fill="#d1bc95"/><rect x="458" y="347" width="16" height="16" fill="#d1bc95"/><rect x="474" y="347" width="16" height="16" fill="#d1bc95"/><rect x="490" y="347" width="16" height="16" fill="#d1bd95"/><rect x="506" y="347" width="16" height="16" fill="#d1bd95"/><rect x="10" y="363" width="16" height="16" fill="#b2a387"/><rect x="26" y="363" width="16" height="16" fill="#b4a588"/><rect x="42" y="363" width="16" height="16" fill="#b8a889"/><rect x="58" y="363" width="16" height="16" fill="#bcab8b"/><rect x="74" y="363" width="16" height="16" fill="#c1af8e"/><rect x="90" y="363" width="16" height="16" fill="#c5b390"/><rect x="106" y="363" width="16" height="16" fill="#c9b692"/><rect x="122" y="363" width="16" height="16" fill="#cdb994"/><rect x="138" y="363" width="16" height="16" fill="#cfbb96"/><rect x="154" y="363" width="16" height="16" fill="#d1bc97"/><rect x="170" y="363" width="16" height="16" fill="#d2bd97"/><rect x="186" y="363" width="16" height="16" fill="#d2bd97"/><rect x="202" y="363" width="16" height="16" fill="#d2bd97"/><rect x="218" y="363" width="16" height="16" fill="#d2bc97"/><rect x="234" y="363" width="16" height="16" fill="#d1bc96"/><rect x="250" y="363" width="16" height="16" fill="#d1bb96"/><rect x="266" y="363" width="16" height="16" fill="#d0bb95"/><rect x="282" y="363" width="16" height="16" fill="#d0ba95"/><rect x="298" y="363" width="16" height="16" fill="#cfba94"/><rect x="314" y="363" width="16" height="16" fill="#cfba94"/><rect x="330" y="363" width="16" height="16" fill="#cfba94"/><rect x="346" y="363" width="16" height="16" fill="#cfba94"/><rect x="362" y="363" width="16" height="16" fill="#cfba94"/><rect x="378" y="363" width="16" height="16" fill="#cfba94"/><rect x="394" y="363" width="16" height="16" fill="#d0bb94"/><rect x="410" y="363" width="16" height="16" fill="#d0bb94"/><rect x="426" y="363" width="16" height="16" fill="#d0bb94"/><rect x="442" y="363" width="16" height="16" fill="#d0bb95"/><rect x="458" y="363" width="16" height="16" fill="#d0bc95"/><rect x="474" y="363" width="16" height="16" fill="#d0bc95"/><rect x="490" y="363" width="16" height="16" fill="#d1bc95"/><rect x="506" y="363" width="16" height="16" fill="#d1bc95"/></g></g>
  <g clip-path="url(#clipR)"><g filter="url(#blw)"><rect x="10" y="75" width="16" height="16" fill="#d8c298"/><rect x="26" y="75" width="16" height="16" fill="#d8c298"/><rect x="42" y="75" width="16" height="16" fill="#d8c299"/><rect x="58" y="75" width="16" height="16" fill="#d8c299"/><rect x="74" y="75" width="16" height="16" fill="#d8c399"/><rect x="90" y="75" width="16" height="16" fill="#d9c399"/><rect x="106" y="75" width="16" height="16" fill="#d9c399"/><rect x="122" y="75" width="16" height="16" fill="#d9c399"/><rect x="138" y="75" width="16" height="16" fill="#d9c399"/><rect x="154" y="75" width="16" height="16" fill="#d9c39a"/><rect x="170" y="75" width="16" height="16" fill="#d9c49a"/><rect x="186" y="75" width="16" height="16" fill="#d9c49a"/><rect x="202" y="75" width="16" height="16" fill="#dac49a"/><rect x="218" y="75" width="16" height="16" fill="#dac49a"/><rect x="234" y="75" width="16" height="16" fill="#dac59b"/><rect x="250" y="75" width="16" height="16" fill="#dac59b"/><rect x="266" y="75" width="16" height="16" fill="#dac59b"/><rect x="282" y="75" width="16" height="16" fill="#dac59c"/><rect x="298" y="75" width="16" height="16" fill="#dac59c"/><rect x="314" y="75" width="16" height="16" fill="#dac69c"/><rect x="330" y="75" width="16" height="16" fill="#dac69d"/><rect x="346" y="75" width="16" height="16" fill="#dac69c"/><rect x="362" y="75" width="16" height="16" fill="#dac59c"/><rect x="378" y="75" width="16" height="16" fill="#d9c59b"/><rect x="394" y="75" width="16" height="16" fill="#d9c59b"/><rect x="410" y="75" width="16" height="16" fill="#d9c59a"/><rect x="426" y="75" width="16" height="16" fill="#d8c59a"/><rect x="442" y="75" width="16" height="16" fill="#d6c398"/><rect x="458" y="75" width="16" height="16" fill="#d4c197"/><rect x="474" y="75" width="16" height="16" fill="#d2bf95"/><rect x="490" y="75" width="16" height="16" fill="#d1bd94"/><rect x="506" y="75" width="16" height="16" fill="#cfbb92"/><rect x="10" y="91" width="16" height="16" fill="#d7c198"/><rect x="26" y="91" width="16" height="16" fill="#d8c198"/><rect x="42" y="91" width="16" height="16" fill="#d8c198"/><rect x="58" y="91" width="16" height="16" fill="#d8c298"/><rect x="74" y="91" width="16" height="16" fill="#d8c298"/><rect x="90" y="91" width="16" height="16" fill="#d8c298"/><rect x="106" y="91" width="16" height="16" fill="#d8c298"/><rect x="122" y="91" width="16" height="16" fill="#d8c299"/><rect x="138" y="91" width="16" height="16" fill="#d8c299"/><rect x="154" y="91" width="16" height="16" fill="#d9c399"/><rect x="170" y="91" width="16" height="16" fill="#d9c399"/><rect x="186" y="91" width="16" height="16" fill="#d9c399"/><rect x="202" y="91" width="16" height="16" fill="#d9c399"/><rect x="218" y="91" width="16" height="16" fill="#d9c39a"/><rect x="234" y="91" width="16" height="16" fill="#d9c39a"/><rect x="250" y="91" width="16" height="16" fill="#d9c49a"/><rect x="266" y="91" width="16" height="16" fill="#d9c49a"/><rect x="282" y="91" width="16" height="16" fill="#d9c49a"/><rect x="298" y="91" width="16" height="16" fill="#d9c49b"/><rect x="314" y="91" width="16" height="16" fill="#d9c49b"/><rect x="330" y="91" width="16" height="16" fill="#d9c59c"/><rect x="346" y="91" width="16" height="16" fill="#d9c59c"/><rect x="362" y="91" width="16" height="16" fill="#d9c49a"/><rect x="378" y="91" width="16" height="16" fill="#d8c399"/><rect x="394" y="91" width="16" height="16" fill="#d8c399"/><rect x="410" y="91" width="16" height="16" fill="#d7c399"/><rect x="426" y="91" width="16" height="16" fill="#d7c499"/><rect x="442" y="91" width="16" height="16" fill="#d5c297"/><rect x="458" y="91" width="16" height="16" fill="#d3bf95"/><rect x="474" y="91" width="16" height="16" fill="#d1bd93"/><rect x="490" y="91" width="16" height="16" fill="#cfbb92"/><rect x="506" y="91" width="16" height="16" fill="#cdb991"/><rect x="10" y="107" width="16" height="16" fill="#d7c097"/><rect x="26" y="107" width="16" height="16" fill="#d7c197"/><rect x="42" y="107" width="16" height="16" fill="#d7c197"/><rect x="58" y="107" width="16" height="16" fill="#d7c197"/><rect x="74" y="107" width="16" height="16" fill="#d7c197"/><rect x="90" y="107" width="16" height="16" fill="#d7c198"/><rect x="106" y="107" width="16" height="16" fill="#d8c198"/><rect x="122" y="107" width="16" height="16" fill="#d8c198"/><rect x="138" y="107" width="16" height="16" fill="#d8c198"/><rect x="154" y="107" width="16" height="16" fill="#d8c298"/><rect x="170" y="107" width="16" height="16" fill="#d8c298"/><rect x="186" y="107" width="16" height="16" fill="#d8c298"/><rect x="202" y="107" width="16" height="16" fill="#d8c298"/><rect x="218" y="107" width="16" height="16" fill="#d8c299"/><rect x="234" y="107" width="16" height="16" fill="#d8c299"/><rect x="250" y="107" width="16" height="16" fill="#d8c299"/><rect x="266" y="107" width="16" height="16" fill="#d8c399"/><rect x="282" y="107" width="16" height="16" fill="#d9c399"/><rect x="298" y="107" width="16" height="16" fill="#d8c399"/><rect x="314" y="107" width="16" height="16" fill="#d8c399"/><rect x="330" y="107" width="16" height="16" fill="#d8c39a"/><rect x="346" y="107" width="16" height="16" fill="#d8c299"/><rect x="362" y="107" width="16" height="16" fill="#d7c198"/><rect x="378" y="107" width="16" height="16" fill="#d6c097"/><rect x="394" y="107" width="16" height="16" fill="#d6bf96"/><rect x="410" y="107" width="16" height="16" fill="#d5bf95"/><rect x="426" y="107" width="16" height="16" fill="#d4bf95"/><rect x="442" y="107" width="16" height="16" fill="#d3be94"/><rect x="458" y="107" width="16" height="16" fill="#d1bc92"/><rect x="474" y="107" width="16" height="16" fill="#cfba91"/><rect x="490" y="107" width="16" height="16" fill="#cdb890"/><rect x="506" y="107" width="16" height="16" fill="#cbb78f"/><rect x="10" y="123" width="16" height="16" fill="#d6c096"/><rect x="26" y="123" width="16" height="16" fill="#d6c097"/><rect x="42" y="123" width="16" height="16" fill="#d6c097"/><rect x="58" y="123" width="16" height="16" fill="#d7c097"/><rect x="74" y="123" width="16" height="16" fill="#d7c097"/><rect x="90" y="123" width="16" height="16" fill="#d7c097"/><rect x="106" y="123" width="16" height="16" fill="#d7c097"/><rect x="122" y="123" width="16" height="16" fill="#d7c097"/><rect x="138" y="123" width="16" height="16" fill="#d7c197"/><rect x="154" y="123" width="16" height="16" fill="#d7c197"/><rect x="170" y="123" width="16" height="16" fill="#d7c197"/><rect x="186" y="123" width="16" height="16" fill="#d7c197"/><rect x="202" y="123" width="16" height="16" fill="#d7c197"/><rect x="218" y="123" width="16" height="16" fill="#d7c197"/><rect x="234" y="123" width="16" height="16" fill="#d7c198"/><rect x="250" y="123" width="16" height="16" fill="#d8c198"/><rect x="266" y="123" width="16" height="16" fill="#d8c198"/><rect x="282" y="123" width="16" height="16" fill="#d7c198"/><rect x="298" y="123" width="16" height="16" fill="#d7c197"/><rect x="314" y="123" width="16" height="16" fill="#d7c197"/><rect x="330" y="123" width="16" height="16" fill="#d7c197"/><rect x="346" y="123" width="16" height="16" fill="#d6c096"/><rect x="362" y="123" width="16" height="16" fill="#d5be95"/><rect x="378" y="123" width="16" height="16" fill="#d4bd94"/><rect x="394" y="123" width="16" height="16" fill="#d3bc93"/><rect x="410" y="123" width="16" height="16" fill="#d2bb92"/><rect x="426" y="123" width="16" height="16" fill="#d1ba91"/><rect x="442" y="123" width="16" height="16" fill="#cfb990"/><rect x="458" y="123" width="16" height="16" fill="#ceb88f"/><rect x="474" y="123" width="16" height="16" fill="#ccb78e"/><rect x="490" y="123" width="16" height="16" fill="#cab58e"/><rect x="506" y="123" width="16" height="16" fill="#c9b48d"/><rect x="10" y="139" width="16" height="16" fill="#d6bf96"/><rect x="26" y="139" width="16" height="16" fill="#d6bf96"/><rect x="42" y="139" width="16" height="16" fill="#d6bf96"/><rect x="58" y="139" width="16" height="16" fill="#d6bf96"/><rect x="74" y="139" width="16" height="16" fill="#d6bf96"/><rect x="90" y="139" width="16" height="16" fill="#d6bf96"/><rect x="106" y="139" width="16" height="16" fill="#d6bf96"/><rect x="122" y="139" width="16" height="16" fill="#d6bf96"/><rect x="138" y="139" width="16" height="16" fill="#d6c096"/><rect x="154" y="139" width="16" height="16" fill="#d6c096"/><rect x="170" y="139" width="16" height="16" fill="#d6c096"/><rect x="186" y="139" width="16" height="16" fill="#d6c096"/><rect x="202" y="139" width="16" height="16" fill="#d6c096"/><rect x="218" y="139" width="16" height="16" fill="#d7c096"/><rect x="234" y="139" width="16" height="16" fill="#d7c096"/><rect x="250" y="139" width="16" height="16" fill="#d6c096"/><rect x="266" y="139" width="16" height="16" fill="#d6c096"/><rect x="282" y="139" width="16" height="16" fill="#d6bf96"/><rect x="298" y="139" width="16" height="16" fill="#d6bf96"/><rect x="314" y="139" width="16" height="16" fill="#d6bf95"/><rect x="330" y="139" width="16" height="16" fill="#d5be94"/><rect x="346" y="139" width="16" height="16" fill="#d5bd93"/><rect x="362" y="139" width="16" height="16" fill="#d3bc92"/><rect x="378" y="139" width="16" height="16" fill="#d2ba91"/><rect x="394" y="139" width="16" height="16" fill="#d0b890"/><rect x="410" y="139" width="16" height="16" fill="#cfb78f"/><rect x="426" y="139" width="16" height="16" fill="#cdb58e"/><rect x="442" y="139" width="16" height="16" fill="#ccb48d"/><rect x="458" y="139" width="16" height="16" fill="#cab48c"/><rect x="474" y="139" width="16" height="16" fill="#c9b38c"/><rect x="490" y="139" width="16" height="16" fill="#c8b28b"/><rect x="506" y="139" width="16" height="16" fill="#c7b18a"/><rect x="10" y="155" width="16" height="16" fill="#d5be95"/><rect x="26" y="155" width="16" height="16" fill="#d5be95"/><rect x="42" y="155" width="16" height="16" fill="#d5be95"/><rect x="58" y="155" width="16" height="16" fill="#d5be95"/><rect x="74" y="155" width="16" height="16" fill="#d5be95"/><rect x="90" y="155" width="16" height="16" fill="#d5be95"/><rect x="106" y="155" width="16" height="16" fill="#d5be95"/><rect x="122" y="155" width="16" height="16" fill="#d5be95"/><rect x="138" y="155" width="16" height="16" fill="#d5be95"/><rect x="154" y="155" width="16" height="16" fill="#d5be95"/><rect x="170" y="155" width="16" height="16" fill="#d5be95"/><rect x="186" y="155" width="16" height="16" fill="#d6be95"/><rect x="202" y="155" width="16" height="16" fill="#d6be95"/><rect x="218" y="155" width="16" height="16" fill="#d6be95"/><rect x="234" y="155" width="16" height="16" fill="#d5be95"/><rect x="250" y="155" width="16" height="16" fill="#d5be95"/><rect x="266" y="155" width="16" height="16" fill="#d5be95"/><rect x="282" y="155" width="16" height="16" fill="#d5be94"/><rect x="298" y="155" width="16" height="16" fill="#d5bd94"/><rect x="314" y="155" width="16" height="16" fill="#d4bd93"/><rect x="330" y="155" width="16" height="16" fill="#d4bc92"/><rect x="346" y="155" width="16" height="16" fill="#d2ba91"/><rect x="362" y="155" width="16" height="16" fill="#d1b98f"/><rect x="378" y="155" width="16" height="16" fill="#cfb68e"/><rect x="394" y="155" width="16" height="16" fill="#cdb48d"/><rect x="410" y="155" width="16" height="16" fill="#cbb38b"/><rect x="426" y="155" width="16" height="16" fill="#c9b18a"/><rect x="442" y="155" width="16" height="16" fill="#c8b08a"/><rect x="458" y="155" width="16" height="16" fill="#c7b089"/><rect x="474" y="155" width="16" height="16" fill="#c6af89"/><rect x="490" y="155" width="16" height="16" fill="#c5af89"/><rect x="506" y="155" width="16" height="16" fill="#c4ae88"/><rect x="10" y="171" width="16" height="16" fill="#d4bd94"/><rect x="26" y="171" width="16" height="16" fill="#d4bd94"/><rect x="42" y="171" width="16" height="16" fill="#d4bd94"/><rect x="58" y="171" width="16" height="16" fill="#d4bd94"/><rect x="74" y="171" width="16" height="16" fill="#d4bd94"/><rect x="90" y="171" width="16" height="16" fill="#d4bd94"/><rect x="106" y="171" width="16" height="16" fill="#d4bd94"/><rect x="122" y="171" width="16" height="16" fill="#d5bd94"/><rect x="138" y="171" width="16" height="16" fill="#d5bd94"/><rect x="154" y="171" width="16" height="16" fill="#d5bd94"/><rect x="170" y="171" width="16" height="16" fill="#d5bd94"/><rect x="186" y="171" width="16" height="16" fill="#d5bd94"/><rect x="202" y="171" width="16" height="16" fill="#d5bd94"/><rect x="218" y="171" width="16" height="16" fill="#d4bd94"/><rect x="234" y="171" width="16" height="16" fill="#d4bd94"/><rect x="250" y="171" width="16" height="16" fill="#d4bd93"/><rect x="266" y="171" width="16" height="16" fill="#d4bc93"/><rect x="282" y="171" width="16" height="16" fill="#d4bc93"/><rect x="298" y="171" width="16" height="16" fill="#d3bb92"/><rect x="314" y="171" width="16" height="16" fill="#d2ba91"/><rect x="330" y="171" width="16" height="16" fill="#d2b990"/><rect x="346" y="171" width="16" height="16" fill="#d0b88e"/><rect x="362" y="171" width="16" height="16" fill="#ceb68c"/><rect x="378" y="171" width="16" height="16" fill="#ccb38b"/><rect x="394" y="171" width="16" height="16" fill="#cab189"/><rect x="410" y="171" width="16" height="16" fill="#c8af88"/><rect x="426" y="171" width="16" height="16" fill="#c6ad87"/><rect x="442" y="171" width="16" height="16" fill="#c5ad87"/><rect x="458" y="171" width="16" height="16" fill="#c4ac87"/><rect x="474" y="171" width="16" height="16" fill="#c3ac86"/><rect x="490" y="171" width="16" height="16" fill="#c2ac86"/><rect x="506" y="171" width="16" height="16" fill="#c1ab86"/><rect x="10" y="187" width="16" height="16" fill="#d4bc94"/><rect x="26" y="187" width="16" height="16" fill="#d4bc94"/><rect x="42" y="187" width="16" height="16" fill="#d4bc94"/><rect x="58" y="187" width="16" height="16" fill="#d4bc94"/><rect x="74" y="187" width="16" height="16" fill="#d4bc94"/><rect x="90" y="187" width="16" height="16" fill="#d4bc94"/><rect x="106" y="187" width="16" height="16" fill="#d4bc94"/><rect x="122" y="187" width="16" height="16" fill="#d4bc94"/><rect x="138" y="187" width="16" height="16" fill="#d4bc93"/><rect x="154" y="187" width="16" height="16" fill="#d4bc93"/><rect x="170" y="187" width="16" height="16" fill="#d4bc93"/><rect x="186" y="187" width="16" height="16" fill="#d4bc93"/><rect x="202" y="187" width="16" height="16" fill="#d3bc93"/><rect x="218" y="187" width="16" height="16" fill="#d3bc93"/><rect x="234" y="187" width="16" height="16" fill="#d3bb92"/><rect x="250" y="187" width="16" height="16" fill="#d3bb92"/><rect x="266" y="187" width="16" height="16" fill="#d3ba92"/><rect x="282" y="187" width="16" height="16" fill="#d2ba91"/><rect x="298" y="187" width="16" height="16" fill="#d2b990"/><rect x="314" y="187" width="16" height="16" fill="#d1b88f"/><rect x="330" y="187" width="16" height="16" fill="#d0b78e"/><rect x="346" y="187" width="16" height="16" fill="#ceb58c"/><rect x="362" y="187" width="16" height="16" fill="#ccb38a"/><rect x="378" y="187" width="16" height="16" fill="#c9b089"/><rect x="394" y="187" width="16" height="16" fill="#c6ad87"/><rect x="410" y="187" width="16" height="16" fill="#c4ab85"/><rect x="426" y="187" width="16" height="16" fill="#c3aa85"/><rect x="442" y="187" width="16" height="16" fill="#c2a984"/><rect x="458" y="187" width="16" height="16" fill="#c1a984"/><rect x="474" y="187" width="16" height="16" fill="#c0a984"/><rect x="490" y="187" width="16" height="16" fill="#bfa984"/><rect x="506" y="187" width="16" height="16" fill="#bfa984"/><rect x="10" y="203" width="16" height="16" fill="#d3bc93"/><rect x="26" y="203" width="16" height="16" fill="#d3bc93"/><rect x="42" y="203" width="16" height="16" fill="#d3bc93"/><rect x="58" y="203" width="16" height="16" fill="#d3bb93"/><rect x="74" y="203" width="16" height="16" fill="#d3bb93"/><rect x="90" y="203" width="16" height="16" fill="#d3bb93"/><rect x="106" y="203" width="16" height="16" fill="#d3bb93"/><rect x="122" y="203" width="16" height="16" fill="#d3bb93"/><rect x="138" y="203" width="16" height="16" fill="#d3bb92"/><rect x="154" y="203" width="16" height="16" fill="#d3bb92"/><rect x="170" y="203" width="16" height="16" fill="#d3bb92"/><rect x="186" y="203" width="16" height="16" fill="#d2bb92"/><rect x="202" y="203" width="16" height="16" fill="#d2ba92"/><rect x="218" y="203" width="16" height="16" fill="#d2ba92"/><rect x="234" y="203" width="16" height="16" fill="#d2ba91"/><rect x="250" y="203" width="16" height="16" fill="#d2b991"/><rect x="266" y="203" width="16" height="16" fill="#d1b990"/><rect x="282" y="203" width="16" height="16" fill="#d1b890"/><rect x="298" y="203" width="16" height="16" fill="#d0b78f"/><rect x="314" y="203" width="16" height="16" fill="#cfb68e"/><rect x="330" y="203" width="16" height="16" fill="#ceb48c"/><rect x="346" y="203" width="16" height="16" fill="#ccb28b"/><rect x="362" y="203" width="16" height="16" fill="#cab089"/><rect x="378" y="203" width="16" height="16" fill="#c7ad87"/><rect x="394" y="203" width="16" height="16" fill="#c4aa84"/><rect x="410" y="203" width="16" height="16" fill="#c1a883"/><rect x="426" y="203" width="16" height="16" fill="#c0a782"/><rect x="442" y="203" width="16" height="16" fill="#bfa782"/><rect x="458" y="203" width="16" height="16" fill="#bea682"/><rect x="474" y="203" width="16" height="16" fill="#bda682"/><rect x="490" y="203" width="16" height="16" fill="#bda682"/><rect x="506" y="203" width="16" height="16" fill="#bca682"/><rect x="10" y="219" width="16" height="16" fill="#d2bb92"/><rect x="26" y="219" width="16" height="16" fill="#d2bb92"/><rect x="42" y="219" width="16" height="16" fill="#d2bb92"/><rect x="58" y="219" width="16" height="16" fill="#d2bb92"/><rect x="74" y="219" width="16" height="16" fill="#d2ba92"/><rect x="90" y="219" width="16" height="16" fill="#d2ba92"/><rect x="106" y="219" width="16" height="16" fill="#d2ba92"/><rect x="122" y="219" width="16" height="16" fill="#d2ba92"/><rect x="138" y="219" width="16" height="16" fill="#d2ba92"/><rect x="154" y="219" width="16" height="16" fill="#d2ba91"/><rect x="170" y="219" width="16" height="16" fill="#d1ba91"/><rect x="186" y="219" width="16" height="16" fill="#d1b991"/><rect x="202" y="219" width="16" height="16" fill="#d1b991"/><rect x="218" y="219" width="16" height="16" fill="#d1b990"/><rect x="234" y="219" width="16" height="16" fill="#d1b890"/><rect x="250" y="219" width="16" height="16" fill="#d0b890"/><rect x="266" y="219" width="16" height="16" fill="#d0b78f"/><rect x="282" y="219" width="16" height="16" fill="#cfb68e"/><rect x="298" y="219" width="16" height="16" fill="#cfb58d"/><rect x="314" y="219" width="16" height="16" fill="#ceb48c"/><rect x="330" y="219" width="16" height="16" fill="#ccb28b"/><rect x="346" y="219" width="16" height="16" fill="#cbb089"/><rect x="362" y="219" width="16" height="16" fill="#c8ae87"/><rect x="378" y="219" width="16" height="16" fill="#c5ab85"/><rect x="394" y="219" width="16" height="16" fill="#c2a883"/><rect x="410" y="219" width="16" height="16" fill="#bfa682"/><rect x="426" y="219" width="16" height="16" fill="#bda580"/><rect x="442" y="219" width="16" height="16" fill="#bca480"/><rect x="458" y="219" width="16" height="16" fill="#bba480"/><rect x="474" y="219" width="16" height="16" fill="#bba480"/><rect x="490" y="219" width="16" height="16" fill="#baa380"/><rect x="506" y="219" width="16" height="16" fill="#baa380"/><rect x="10" y="235" width="16" height="16" fill="#d1ba91"/><rect x="26" y="235" width="16" height="16" fill="#d1ba91"/><rect x="42" y="235" width="16" height="16" fill="#d1ba91"/><rect x="58" y="235" width="16" height="16" fill="#d1ba91"/><rect x="74" y="235" width="16" height="16" fill="#d1b991"/><rect x="90" y="235" width="16" height="16" fill="#d1b991"/><rect x="106" y="235" width="16" height="16" fill="#d1b991"/><rect x="122" y="235" width="16" height="16" fill="#d1b991"/><rect x="138" y="235" width="16" height="16" fill="#d1b991"/><rect x="154" y="235" width="16" height="16" fill="#d1b890"/><rect x="170" y="235" width="16" height="16" fill="#d0b890"/><rect x="186" y="235" width="16" height="16" fill="#d0b890"/><rect x="202" y="235" width="16" height="16" fill="#d0b890"/><rect x="218" y="235" width="16" height="16" fill="#d0b78f"/><rect x="234" y="235" width="16" height="16" fill="#cfb78f"/><rect x="250" y="235" width="16" height="16" fill="#cfb68e"/><rect x="266" y="235" width="16" height="16" fill="#cfb68e"/><rect x="282" y="235" width="16" height="16" fill="#ceb58d"/><rect x="298" y="235" width="16" height="16" fill="#cdb48c"/><rect x="314" y="235" width="16" height="16" fill="#ccb38b"/><rect x="330" y="235" width="16" height="16" fill="#cbb18a"/><rect x="346" y="235" width="16" height="16" fill="#caaf88"/><rect x="362" y="235" width="16" height="16" fill="#c7ac86"/><rect x="378" y="235" width="16" height="16" fill="#c4a984"/><rect x="394" y="235" width="16" height="16" fill="#c1a783"/><rect x="410" y="235" width="16" height="16" fill="#bea581"/><rect x="426" y="235" width="16" height="16" fill="#bca37f"/><rect x="442" y="235" width="16" height="16" fill="#baa27f"/><rect x="458" y="235" width="16" height="16" fill="#b9a17e"/><rect x="474" y="235" width="16" height="16" fill="#b8a17e"/><rect x="490" y="235" width="16" height="16" fill="#b8a17e"/><rect x="506" y="235" width="16" height="16" fill="#b7a17e"/><rect x="10" y="251" width="16" height="16" fill="#d1b991"/><rect x="26" y="251" width="16" height="16" fill="#d0b991"/><rect x="42" y="251" width="16" height="16" fill="#d0b991"/><rect x="58" y="251" width="16" height="16" fill="#d0b990"/><rect x="74" y="251" width="16" height="16" fill="#d0b890"/><rect x="90" y="251" width="16" height="16" fill="#d0b890"/><rect x="106" y="251" width="16" height="16" fill="#d0b890"/><rect x="122" y="251" width="16" height="16" fill="#d0b890"/><rect x="138" y="251" width="16" height="16" fill="#d0b890"/><rect x="154" y="251" width="16" height="16" fill="#cfb78f"/><rect x="170" y="251" width="16" height="16" fill="#cfb78f"/><rect x="186" y="251" width="16" height="16" fill="#cfb78f"/><rect x="202" y="251" width="16" height="16" fill="#cfb68e"/><rect x="218" y="251" width="16" height="16" fill="#ceb68e"/><rect x="234" y="251" width="16" height="16" fill="#ceb58e"/><rect x="250" y="251" width="16" height="16" fill="#ceb58d"/><rect x="266" y="251" width="16" height="16" fill="#cdb48d"/><rect x="282" y="251" width="16" height="16" fill="#cdb38c"/><rect x="298" y="251" width="16" height="16" fill="#ccb28b"/><rect x="314" y="251" width="16" height="16" fill="#cbb18a"/><rect x="330" y="251" width="16" height="16" fill="#cab089"/><rect x="346" y="251" width="16" height="16" fill="#c9ae88"/><rect x="362" y="251" width="16" height="16" fill="#c6ab86"/><rect x="378" y="251" width="16" height="16" fill="#c3a884"/><rect x="394" y="251" width="16" height="16" fill="#bfa682"/><rect x="410" y="251" width="16" height="16" fill="#bca380"/><rect x="426" y="251" width="16" height="16" fill="#baa17e"/><rect x="442" y="251" width="16" height="16" fill="#b8a07d"/><rect x="458" y="251" width="16" height="16" fill="#b79f7d"/><rect x="474" y="251" width="16" height="16" fill="#b69f7d"/><rect x="490" y="251" width="16" height="16" fill="#b69f7d"/><rect x="506" y="251" width="16" height="16" fill="#b59f7d"/><rect x="10" y="267" width="16" height="16" fill="#d0b890"/><rect x="26" y="267" width="16" height="16" fill="#d0b890"/><rect x="42" y="267" width="16" height="16" fill="#cfb890"/><rect x="58" y="267" width="16" height="16" fill="#cfb890"/><rect x="74" y="267" width="16" height="16" fill="#cfb78f"/><rect x="90" y="267" width="16" height="16" fill="#cfb78f"/><rect x="106" y="267" width="16" height="16" fill="#cfb78f"/><rect x="122" y="267" width="16" height="16" fill="#cfb78f"/><rect x="138" y="267" width="16" height="16" fill="#cfb68f"/><rect x="154" y="267" width="16" height="16" fill="#ceb68e"/><rect x="170" y="267" width="16" height="16" fill="#ceb68e"/><rect x="186" y="267" width="16" height="16" fill="#ceb58e"/><rect x="202" y="267" width="16" height="16" fill="#cdb58d"/><rect x="218" y="267" width="16" height="16" fill="#cdb48d"/><rect x="234" y="267" width="16" height="16" fill="#cdb48c"/><rect x="250" y="267" width="16" height="16" fill="#ccb38c"/><rect x="266" y="267" width="16" height="16" fill="#ccb38b"/><rect x="282" y="267" width="16" height="16" fill="#cbb28b"/><rect x="298" y="267" width="16" height="16" fill="#cbb18a"/><rect x="314" y="267" width="16" height="16" fill="#cab08a"/><rect x="330" y="267" width="16" height="16" fill="#c9af89"/><rect x="346" y="267" width="16" height="16" fill="#c8ad88"/><rect x="362" y="267" width="16" height="16" fill="#c5ab86"/><rect x="378" y="267" width="16" height="16" fill="#c1a783"/><rect x="394" y="267" width="16" height="16" fill="#bea481"/><rect x="410" y="267" width="16" height="16" fill="#baa17f"/><rect x="426" y="267" width="16" height="16" fill="#b89f7d"/><rect x="442" y="267" width="16" height="16" fill="#b69e7c"/><rect x="458" y="267" width="16" height="16" fill="#b59d7c"/><rect x="474" y="267" width="16" height="16" fill="#b49d7c"/><rect x="490" y="267" width="16" height="16" fill="#b39d7c"/><rect x="506" y="267" width="16" height="16" fill="#b39d7b"/><rect x="10" y="283" width="16" height="16" fill="#cfb78f"/><rect x="26" y="283" width="16" height="16" fill="#cfb78f"/><rect x="42" y="283" width="16" height="16" fill="#cfb78f"/><rect x="58" y="283" width="16" height="16" fill="#ceb78f"/><rect x="74" y="283" width="16" height="16" fill="#ceb68e"/><rect x="90" y="283" width="16" height="16" fill="#ceb68e"/><rect x="106" y="283" width="16" height="16" fill="#ceb68e"/><rect x="122" y="283" width="16" height="16" fill="#ceb58e"/><rect x="138" y="283" width="16" height="16" fill="#cdb58e"/><rect x="154" y="283" width="16" height="16" fill="#cdb58d"/><rect x="170" y="283" width="16" height="16" fill="#cdb48d"/><rect x="186" y="283" width="16" height="16" fill="#cdb48d"/><rect x="202" y="283" width="16" height="16" fill="#ccb38c"/><rect x="218" y="283" width="16" height="16" fill="#ccb38c"/><rect x="234" y="283" width="16" height="16" fill="#cbb28b"/><rect x="250" y="283" width="16" height="16" fill="#cbb28b"/><rect x="266" y="283" width="16" height="16" fill="#cab18a"/><rect x="282" y="283" width="16" height="16" fill="#cab08a"/><rect x="298" y="283" width="16" height="16" fill="#c9af89"/><rect x="314" y="283" width="16" height="16" fill="#c8af89"/><rect x="330" y="283" width="16" height="16" fill="#c7ae88"/><rect x="346" y="283" width="16" height="16" fill="#c6ad87"/><rect x="362" y="283" width="16" height="16" fill="#c4aa85"/><rect x="378" y="283" width="16" height="16" fill="#bfa683"/><rect x="394" y="283" width="16" height="16" fill="#bca280"/><rect x="410" y="283" width="16" height="16" fill="#b89f7e"/><rect x="426" y="283" width="16" height="16" fill="#b59d7c"/><rect x="442" y="283" width="16" height="16" fill="#b39b7a"/><rect x="458" y="283" width="16" height="16" fill="#b29b7a"/><rect x="474" y="283" width="16" height="16" fill="#b19b7a"/><rect x="490" y="283" width="16" height="16" fill="#b19b7a"/><rect x="506" y="283" width="16" height="16" fill="#b19b7a"/><rect x="10" y="299" width="16" height="16" fill="#ceb68e"/><rect x="26" y="299" width="16" height="16" fill="#ceb68e"/><rect x="42" y="299" width="16" height="16" fill="#ceb68e"/><rect x="58" y="299" width="16" height="16" fill="#ceb68e"/><rect x="74" y="299" width="16" height="16" fill="#cdb58e"/><rect x="90" y="299" width="16" height="16" fill="#cdb58d"/><rect x="106" y="299" width="16" height="16" fill="#cdb58d"/><rect x="122" y="299" width="16" height="16" fill="#cdb48d"/><rect x="138" y="299" width="16" height="16" fill="#ccb48d"/><rect x="154" y="299" width="16" height="16" fill="#ccb38c"/><rect x="170" y="299" width="16" height="16" fill="#ccb38c"/><rect x="186" y="299" width="16" height="16" fill="#cbb38b"/><rect x="202" y="299" width="16" height="16" fill="#cbb28b"/><rect x="218" y="299" width="16" height="16" fill="#cab18b"/><rect x="234" y="299" width="16" height="16" fill="#cab18a"/><rect x="250" y="299" width="16" height="16" fill="#c9b08a"/><rect x="266" y="299" width="16" height="16" fill="#c9af89"/><rect x="282" y="299" width="16" height="16" fill="#c8af88"/><rect x="298" y="299" width="16" height="16" fill="#c7ae88"/><rect x="314" y="299" width="16" height="16" fill="#c6ad87"/><rect x="330" y="299" width="16" height="16" fill="#c5ac87"/><rect x="346" y="299" width="16" height="16" fill="#c4aa86"/><rect x="362" y="299" width="16" height="16" fill="#c1a884"/><rect x="378" y="299" width="16" height="16" fill="#bda481"/><rect x="394" y="299" width="16" height="16" fill="#b9a07e"/><rect x="410" y="299" width="16" height="16" fill="#b59d7b"/><rect x="426" y="299" width="16" height="16" fill="#b39a79"/><rect x="442" y="299" width="16" height="16" fill="#b09878"/><rect x="458" y="299" width="16" height="16" fill="#af9878"/><rect x="474" y="299" width="16" height="16" fill="#af9979"/><rect x="490" y="299" width="16" height="16" fill="#af9879"/><rect x="506" y="299" width="16" height="16" fill="#af9978"/><rect x="10" y="315" width="16" height="16" fill="#cdb58e"/><rect x="26" y="315" width="16" height="16" fill="#cdb58d"/><rect x="42" y="315" width="16" height="16" fill="#cdb58d"/><rect x="58" y="315" width="16" height="16" fill="#cdb58d"/><rect x="74" y="315" width="16" height="16" fill="#ccb48d"/><rect x="90" y="315" width="16" height="16" fill="#ccb48c"/><rect x="106" y="315" width="16" height="16" fill="#ccb48c"/><rect x="122" y="315" width="16" height="16" fill="#ccb38c"/><rect x="138" y="315" width="16" height="16" fill="#cbb38c"/><rect x="154" y="315" width="16" height="16" fill="#cbb28b"/><rect x="170" y="315" width="16" height="16" fill="#cab28b"/><rect x="186" y="315" width="16" height="16" fill="#cab18a"/><rect x="202" y="315" width="16" height="16" fill="#c9b18a"/><rect x="218" y="315" width="16" height="16" fill="#c9b089"/><rect x="234" y="315" width="16" height="16" fill="#c8af89"/><rect x="250" y="315" width="16" height="16" fill="#c8af88"/><rect x="266" y="315" width="16" height="16" fill="#c7ae88"/><rect x="282" y="315" width="16" height="16" fill="#c6ad87"/><rect x="298" y="315" width="16" height="16" fill="#c5ac86"/><rect x="314" y="315" width="16" height="16" fill="#c4ab86"/><rect x="330" y="315" width="16" height="16" fill="#c3aa85"/><rect x="346" y="315" width="16" height="16" fill="#c1a884"/><rect x="362" y="315" width="16" height="16" fill="#bfa582"/><rect x="378" y="315" width="16" height="16" fill="#bba17e"/><rect x="394" y="315" width="16" height="16" fill="#b69d7b"/><rect x="410" y="315" width="16" height="16" fill="#b39a78"/><rect x="426" y="315" width="16" height="16" fill="#b09776"/><rect x="442" y="315" width="16" height="16" fill="#ad9574"/><rect x="458" y="315" width="16" height="16" fill="#ac9575"/><rect x="474" y="315" width="16" height="16" fill="#ac9676"/><rect x="490" y="315" width="16" height="16" fill="#ac9676"/><rect x="506" y="315" width="16" height="16" fill="#ad9776"/><rect x="10" y="331" width="16" height="16" fill="#ccb48d"/><rect x="26" y="331" width="16" height="16" fill="#ccb48d"/><rect x="42" y="331" width="16" height="16" fill="#ccb48c"/><rect x="58" y="331" width="16" height="16" fill="#ccb48c"/><rect x="74" y="331" width="16" height="16" fill="#cbb38c"/><rect x="90" y="331" width="16" height="16" fill="#cbb38c"/><rect x="106" y="331" width="16" height="16" fill="#cbb28b"/><rect x="122" y="331" width="16" height="16" fill="#cab28b"/><rect x="138" y="331" width="16" height="16" fill="#cab28b"/><rect x="154" y="331" width="16" height="16" fill="#cab18a"/><rect x="170" y="331" width="16" height="16" fill="#c9b08a"/><rect x="186" y="331" width="16" height="16" fill="#c9b089"/><rect x="202" y="331" width="16" height="16" fill="#c8af89"/><rect x="218" y="331" width="16" height="16" fill="#c8af88"/><rect x="234" y="331" width="16" height="16" fill="#c7ae88"/><rect x="250" y="331" width="16" height="16" fill="#c6ad87"/><rect x="266" y="331" width="16" height="16" fill="#c5ac86"/><rect x="282" y="331" width="16" height="16" fill="#c4ab86"/><rect x="298" y="331" width="16" height="16" fill="#c3aa85"/><rect x="314" y="331" width="16" height="16" fill="#c2a984"/><rect x="330" y="331" width="16" height="16" fill="#c0a783"/><rect x="346" y="331" width="16" height="16" fill="#bea581"/><rect x="362" y="331" width="16" height="16" fill="#bca37f"/><rect x="378" y="331" width="16" height="16" fill="#b89f7b"/><rect x="394" y="331" width="16" height="16" fill="#b49b77"/><rect x="410" y="331" width="16" height="16" fill="#b09775"/><rect x="426" y="331" width="16" height="16" fill="#ad9472"/><rect x="442" y="331" width="16" height="16" fill="#aa9170"/><rect x="458" y="331" width="16" height="16" fill="#a89170"/><rect x="474" y="331" width="16" height="16" fill="#a99272"/><rect x="490" y="331" width="16" height="16" fill="#aa9474"/><rect x="506" y="331" width="16" height="16" fill="#ab9574"/><rect x="10" y="347" width="16" height="16" fill="#ccb48c"/><rect x="26" y="347" width="16" height="16" fill="#cbb38c"/><rect x="42" y="347" width="16" height="16" fill="#cbb38c"/><rect x="58" y="347" width="16" height="16" fill="#cbb38b"/><rect x="74" y="347" width="16" height="16" fill="#cab28b"/><rect x="90" y="347" width="16" height="16" fill="#cab28b"/><rect x="106" y="347" width="16" height="16" fill="#cab18a"/><rect x="122" y="347" width="16" height="16" fill="#c9b18a"/><rect x="138" y="347" width="16" height="16" fill="#c9b08a"/><rect x="154" y="347" width="16" height="16" fill="#c8b089"/><rect x="170" y="347" width="16" height="16" fill="#c8af89"/><rect x="186" y="347" width="16" height="16" fill="#c7af88"/><rect x="202" y="347" width="16" height="16" fill="#c7ae88"/><rect x="218" y="347" width="16" height="16" fill="#c6ad87"/><rect x="234" y="347" width="16" height="16" fill="#c5ac86"/><rect x="250" y="347" width="16" height="16" fill="#c5ab86"/><rect x="266" y="347" width="16" height="16" fill="#c4ab85"/><rect x="282" y="347" width="16" height="16" fill="#c3a984"/><rect x="298" y="347" width="16" height="16" fill="#c1a883"/><rect x="314" y="347" width="16" height="16" fill="#c0a782"/><rect x="330" y="347" width="16" height="16" fill="#bea581"/><rect x="346" y="347" width="16" height="16" fill="#bca37f"/><rect x="362" y="347" width="16" height="16" fill="#b9a07d"/><rect x="378" y="347" width="16" height="16" fill="#b69d79"/><rect x="394" y="347" width="16" height="16" fill="#b29976"/><rect x="410" y="347" width="16" height="16" fill="#af9674"/><rect x="426" y="347" width="16" height="16" fill="#ac9371"/><rect x="442" y="347" width="16" height="16" fill="#a9916f"/><rect x="458" y="347" width="16" height="16" fill="#a8906f"/><rect x="474" y="347" width="16" height="16" fill="#a89170"/><rect x="490" y="347" width="16" height="16" fill="#a99272"/><rect x="506" y="347" width="16" height="16" fill="#aa9373"/><rect x="10" y="363" width="16" height="16" fill="#cbb38b"/><rect x="26" y="363" width="16" height="16" fill="#cab28b"/><rect x="42" y="363" width="16" height="16" fill="#cab28b"/><rect x="58" y="363" width="16" height="16" fill="#cab28b"/><rect x="74" y="363" width="16" height="16" fill="#cab18a"/><rect x="90" y="363" width="16" height="16" fill="#c9b18a"/><rect x="106" y="363" width="16" height="16" fill="#c9b089"/><rect x="122" y="363" width="16" height="16" fill="#c8b089"/><rect x="138" y="363" width="16" height="16" fill="#c8af89"/><rect x="154" y="363" width="16" height="16" fill="#c7af88"/><rect x="170" y="363" width="16" height="16" fill="#c7ae88"/><rect x="186" y="363" width="16" height="16" fill="#c6ad87"/><rect x="202" y="363" width="16" height="16" fill="#c6ad87"/><rect x="218" y="363" width="16" height="16" fill="#c5ac86"/><rect x="234" y="363" width="16" height="16" fill="#c4ab85"/><rect x="250" y="363" width="16" height="16" fill="#c3aa84"/><rect x="266" y="363" width="16" height="16" fill="#c2a984"/><rect x="282" y="363" width="16" height="16" fill="#c1a883"/><rect x="298" y="363" width="16" height="16" fill="#c0a682"/><rect x="314" y="363" width="16" height="16" fill="#bea580"/><rect x="330" y="363" width="16" height="16" fill="#bca37f"/><rect x="346" y="363" width="16" height="16" fill="#baa17d"/><rect x="362" y="363" width="16" height="16" fill="#b79e7b"/><rect x="378" y="363" width="16" height="16" fill="#b49b78"/><rect x="394" y="363" width="16" height="16" fill="#b19875"/><rect x="410" y="363" width="16" height="16" fill="#ae9673"/><rect x="426" y="363" width="16" height="16" fill="#ac9371"/><rect x="442" y="363" width="16" height="16" fill="#aa9170"/><rect x="458" y="363" width="16" height="16" fill="#a8916f"/><rect x="474" y="363" width="16" height="16" fill="#a89170"/><rect x="490" y="363" width="16" height="16" fill="#a89271"/><rect x="506" y="363" width="16" height="16" fill="#a99272"/></g></g>
  <!-- door -->
  <polygon points="459.5,91 495,91 495,272 456.5,108" fill="#a2703f"/>
  <polygon points="453,91 459.5,91 456.5,108 475,180 497,276 497,300 492,290 469,180 450,108" fill="#dcd0ae"/>
  <polygon points="453,91 456,91 453,108 471.5,180 494,290 492,290 469,180 450,108" fill="#bdb196"/>
  <polygon points="461.5,143 467,142 472.5,173 468,175" fill="#6e6254"/>
  <rect x="26" y="345.5" width="50" height="8.5" fill="#383b32"/>
  <!-- poster -->
  <polygon points="184,196 348,194.5 354,354 181,354" fill="url(#mat)"/>
  <polygon points="204,215 326.5,214 334,354 202.5,354" fill="url(#teal)"/>
  <!-- person -->
  <g filter="url(#bl1)">
    <path d="M203,338 Q218,328 236,322 L300,322 Q318,328 334,336 L334,354 L203,354 Z" fill="#343c34"/>
    <path d="M238,324 Q244,342 254,354 L244,354 Q236,344 234,330 Z" fill="#8e9ea4"/>
    <path d="M297,324 Q293,342 284,354 L294,354 Q300,344 301,330 Z" fill="#8e9ea4"/>
    <path d="M246,310 L292,310 L296,326 Q286,345 274,354 L256,354 Q246,340 242,326 Z" fill="#2e221c"/>
    <path d="M244,318 Q250,336 258,350 L252,352 Q244,338 241,326 Z" fill="#5e3a2c" opacity="0.7"/>
    <path d="M229,292 Q222,244 243,228 Q266,218 291,228 Q309,242 304,272 L300,292 Q297,270 292,256 Q285,242 266,242 Q246,244 240,258 Q236,270 236,292 Z" fill="#2b2a25"/>
    <path d="M237,266 Q240,244 266,242 Q292,244 296,262 L298,292 Q294,316 268,323 Q242,316 238,292 Z" fill="#a25f4b"/>
    <ellipse cx="233" cy="282" rx="4" ry="10" fill="#5a3a2e"/>
    <ellipse cx="301" cy="282" rx="3.5" ry="10" fill="#4e342a"/>
    <ellipse cx="266" cy="252" rx="22" ry="8" fill="#b87560" opacity="0.85"/>
    <ellipse cx="270" cy="286" rx="5.5" ry="12" fill="#c08068" opacity="0.75"/>
    <ellipse cx="251" cy="291" rx="9" ry="7" fill="#b4705a" opacity="0.65"/>
    <ellipse cx="287" cy="291" rx="8" ry="7" fill="#9e5e4c" opacity="0.5"/>
    <path d="M245,267 Q254,263 263,266" stroke="#35251e" stroke-width="2.8" fill="none"/>
    <path d="M275,266 Q284,263 293,267" stroke="#35251e" stroke-width="2.8" fill="none"/>
    <ellipse cx="255" cy="274" rx="7" ry="3.8" fill="#48291f"/>
    <ellipse cx="284" cy="274" rx="7" ry="3.8" fill="#48291f"/>
    <path d="M255,304 Q268,309 282,304" stroke="#55281f" stroke-width="2" fill="none"/>
    <ellipse cx="268" cy="309" rx="9" ry="2.5" fill="#b67268" opacity="0.7"/>
    <ellipse cx="268" cy="318" rx="13" ry="4.5" fill="#7a4636" opacity="0.55"/>
  </g>
  <!-- detection overlay -->
  <rect x="237" y="241" width="58" height="83" fill="none" stroke="#1818e6" stroke-width="1.9"/>
  <path d="M289.8,251.0L289.1,251.2L288.7,251.5L288.5,252.1L288.7,252.7L289.2,253.1L289.8,253.3L290.4,253.1L291.0,252.6L291.2,252.1L291.0,251.6L290.5,251.2ZM272.5,251.0L271.8,251.2L271.3,251.6L271.1,252.1L271.3,252.6L271.9,253.1L272.5,253.3L273.1,253.1L273.7,252.6L273.9,252.1L273.7,251.6L273.2,251.2ZM272.5,247.1L271.9,247.3L271.3,247.8L271.1,248.3L271.3,248.8L271.7,249.2L272.5,249.5L273.3,249.2L273.7,248.8L273.9,248.3L273.7,247.8L273.1,247.3ZM266.4,247.2L265.8,247.5L264.6,248.4L264.1,249.6L264.1,250.8L264.6,252.0L265.8,253.0L266.9,253.3L268.5,253.2L269.4,252.8L270.4,251.9L270.4,251.2L269.9,250.7L270.3,250.4L270.5,249.9L270.4,248.8L270.0,248.1L268.6,247.2ZM266.2,250.8L268.9,250.8L267.9,251.6L266.9,251.5ZM259.6,247.2L259.0,247.5L257.9,248.3L257.3,249.6L257.3,250.8L257.9,252.1L259.0,253.0L260.1,253.3L261.7,253.2L262.9,252.7L263.6,252.1L263.8,251.5L263.6,251.0L262.8,250.7L262.1,250.8L261.1,251.6L260.3,251.6L259.4,250.8L259.4,249.6L260.1,248.9L261.1,248.8L262.1,249.6L262.8,249.8L263.2,249.7L263.7,249.3L263.6,248.3L262.4,247.5L261.8,247.2ZM252.0,247.5L250.8,248.4L250.3,249.5L250.2,250.6L250.6,251.8L251.7,252.8L252.6,253.2L254.2,253.3L255.0,253.1L255.7,253.3L256.3,253.1L256.7,252.5L256.7,248.0L256.5,247.5L255.7,247.1L255.0,247.4L254.2,247.1L253.1,247.1ZM253.3,248.8L254.0,248.8L254.7,249.4L254.7,251.2L254.0,251.6L253.3,251.6L252.9,251.4L252.4,251.0L252.2,250.5L252.4,249.5ZM300.7,245.0L300.2,245.2L300.0,245.8L300.5,246.4L301.1,246.6L303.1,246.7L302.0,248.0L301.9,248.3L302.1,248.8L302.5,249.1L304.1,249.3L304.4,249.5L304.6,250.4L304.3,251.1L303.3,251.6L302.3,251.6L301.7,251.4L300.9,250.5L300.2,250.3L299.8,250.4L299.3,250.8L299.3,251.6L300.2,252.7L301.7,253.2L303.3,253.3L304.8,253.0L306.0,252.0L306.6,250.6L306.6,249.9L306.0,248.4L305.3,247.8L304.8,247.6L306.0,246.3L306.2,245.8L306.1,245.4L305.8,245.1L305.2,244.9ZM294.7,244.9L293.6,245.2L292.4,246.2L291.9,247.2L291.8,248.0L292.2,249.2L293.3,250.3L294.7,250.7L296.4,250.7L296.0,251.3L295.4,251.6L294.5,251.5L293.8,250.8L293.2,250.7L292.6,250.8L292.3,251.2L292.3,251.9L292.9,252.8L294.1,253.2L295.4,253.3L296.8,253.0L297.4,252.6L298.2,251.5L298.6,250.0L298.6,247.6L298.1,246.2L297.1,245.4L295.7,244.9ZM295.0,246.6L295.9,246.8L296.4,247.2L296.6,247.8L296.5,248.3L295.9,248.8L295.4,249.0L294.5,248.8L294.0,248.4L293.8,247.9L294.0,247.2L294.5,246.8ZM283.4,244.9L282.3,245.2L281.8,245.6L281.2,246.4L280.6,248.1L280.5,249.6L280.9,251.3L281.8,252.6L282.3,253.0L283.2,253.2L284.5,253.3L286.0,253.0L286.5,252.6L287.4,251.3L287.9,249.6L287.9,248.6L287.4,246.9L286.5,245.6L286.0,245.2L284.8,244.9ZM283.8,246.6L284.5,246.6L285.1,246.9L285.5,247.5L285.8,248.8L285.5,250.7L285.1,251.3L284.5,251.6L283.9,251.6L283.2,251.3L282.8,250.7L282.5,249.5L282.8,247.5L283.2,246.9ZM250.3,245.1L249.6,244.9L244.8,244.9L244.0,245.2L243.8,245.8L243.8,252.5L244.2,253.1L244.8,253.3L245.2,253.2L245.7,252.8L245.8,249.9L248.2,249.7L248.6,249.5L248.8,248.9L248.6,248.4L248.2,248.2L245.9,248.1L245.8,246.7L250.0,246.5L250.5,246.3L250.7,245.8Z" fill="#1c1ce8" fill-rule="evenodd"/>
  <g fill="#28e028">
    <circle cx="255.5" cy="273.5" r="2.3"/>
    <circle cx="283.5" cy="273.5" r="2.3"/>
    <circle cx="270.7" cy="291" r="2.3"/>
    <circle cx="255.5" cy="303" r="2.3"/>
    <circle cx="280.2" cy="303" r="2.3"/>
  </g>
  <!-- info box -->
  <rect x="28.5" y="93.5" width="183" height="62" fill="#000" stroke="#f2ead6" stroke-width="1.2"/>
  <path d="M96.6,117.9L96.2,118.0L95.2,119.0L95.1,119.3L95.2,119.7L96.2,120.7L96.6,120.8L97.3,120.5L97.9,119.9L98.1,119.3L97.9,118.8L97.3,118.2ZM96.6,111.0L96.2,111.1L95.2,112.1L95.1,112.4L95.2,112.8L96.2,113.8L96.6,113.9L97.3,113.6L97.9,113.0L98.1,112.4L97.9,111.9L97.3,111.3ZM87.3,111.1L85.8,111.6L85.1,112.2L84.5,113.6L85.1,115.1L85.6,115.6L86.8,116.1L89.5,116.6L90.6,117.1L91.0,118.0L90.4,118.8L89.5,119.1L87.8,119.1L86.7,118.7L86.2,117.8L85.8,117.4L85.4,117.3L85.0,117.4L84.6,117.8L84.6,118.7L85.1,119.6L85.7,120.2L87.5,120.8L89.8,120.8L91.6,120.2L92.2,119.6L92.8,118.2L92.7,117.1L92.2,116.1L91.7,115.7L90.1,115.0L87.4,114.5L86.8,114.2L86.4,113.5L86.7,113.1L87.9,112.7L89.4,112.7L90.6,113.1L91.0,113.9L91.5,114.4L91.9,114.5L92.3,114.4L92.7,114.0L92.7,113.1L92.2,112.2L91.5,111.6L89.5,111.0ZM77.2,111.1L76.2,111.6L74.5,113.2L73.8,115.4L73.9,116.9L74.7,118.9L76.2,120.2L77.7,120.8L80.0,120.7L81.4,119.9L82.5,118.9L82.4,118.8L82.7,118.2L82.6,117.8L82.2,117.4L81.4,117.4L80.1,118.7L79.3,119.1L77.8,119.1L77.2,118.8L76.1,117.7L75.6,116.3L82.2,116.1L82.6,115.7L82.7,115.4L82.6,113.6L82.1,112.6L81.1,111.7L79.9,111.1ZM76.0,114.3L77.1,113.1L77.9,112.7L79.3,112.7L80.5,113.5L80.9,114.4L76.1,114.5ZM66.6,111.1L65.2,111.9L63.8,113.3L63.2,115.1L63.2,116.7L63.8,118.5L64.1,118.8L64.0,118.9L65.1,119.9L67.0,120.8L69.3,120.7L70.7,119.9L71.8,118.9L72.1,118.2L72.0,117.8L71.6,117.4L70.8,117.4L69.4,118.7L68.6,119.1L67.2,119.1L66.4,118.7L65.5,117.8L65.0,116.5L65.0,115.4L65.4,114.2L66.3,113.2L67.3,112.7L68.6,112.7L69.6,113.2L70.5,114.2L71.2,114.5L71.6,114.4L72.0,114.0L72.0,113.2L70.4,111.7L69.2,111.1ZM54.3,111.6L52.6,113.2L52.0,114.9L51.9,116.4L52.6,118.6L53.9,119.9L55.3,120.7L57.6,120.8L59.0,120.2L59.5,120.7L60.3,120.7L60.7,120.3L60.8,119.9L60.7,111.5L60.3,111.1L59.9,111.0L59.5,111.1L59.0,111.6L57.6,111.0L55.8,111.0ZM56.0,112.7L57.4,112.7L58.2,113.1L59.0,113.9L59.0,117.9L58.2,118.7L57.4,119.1L55.9,119.1L55.3,118.8L54.2,117.7L53.7,116.3L53.7,115.5L54.2,114.1L55.0,113.2ZM115.6,107.0L115.0,107.3L114.9,107.2L113.1,108.9L112.2,109.3L111.8,109.7L111.7,110.1L111.8,110.5L112.2,110.9L112.6,111.0L113.1,110.9L114.6,110.0L114.7,110.1L114.7,119.9L114.8,120.3L115.2,120.7L115.6,120.8L116.0,120.7L116.4,120.3L116.5,119.9L116.5,107.9L116.4,107.5L116.0,107.1ZM50.9,107.1L42.8,107.0L42.4,107.1L42.0,107.5L41.9,119.9L42.0,120.3L42.4,120.7L43.2,120.7L43.6,120.3L43.7,119.9L43.7,114.6L47.9,114.4L48.3,114.0L48.4,113.6L48.3,113.2L47.9,112.8L43.7,112.6L43.7,108.8L50.5,108.7L50.9,108.7L51.3,108.3L51.4,107.9L51.3,107.5Z" fill="#34f234" fill-rule="evenodd"/>
  <path d="M97.3,140.5L96.8,140.7L96.3,141.2L96.1,141.7L96.7,142.6L97.3,142.8L97.8,142.6L98.4,141.7L98.2,141.1ZM68.5,140.5L67.6,141.1L67.4,141.7L67.6,142.2L68.5,142.8L69.0,142.6L69.6,141.7L69.4,141.1ZM68.5,135.4L68.0,135.6L67.4,136.5L67.7,137.2L68.5,137.6L69.3,137.2L69.6,136.5L69.4,136.0ZM103.4,132.3L101.9,132.8L101.4,133.2L100.6,134.4L100.1,136.5L100.1,138.6L100.5,140.5L101.5,142.1L103.2,142.8L104.5,142.8L105.9,142.3L107.0,140.8L107.6,138.3L107.6,136.8L107.0,134.3L106.3,133.3L105.6,132.7L104.3,132.3ZM103.5,133.7L104.1,133.7L105.2,134.2L105.8,135.1L106.2,137.0L106.2,138.1L105.8,140.1L105.1,141.1L104.2,141.4L103.4,141.4L102.3,140.8L101.9,140.2L101.5,138.4L101.5,136.7L101.8,135.2L102.6,134.0ZM90.3,132.3L88.8,132.8L88.3,133.2L87.5,134.4L87.0,136.6L87.0,138.5L87.4,140.5L88.4,142.1L90.1,142.8L91.4,142.8L93.1,142.1L94.0,140.7L94.5,138.4L94.5,136.7L94.0,134.5L93.1,133.1L91.6,132.4ZM90.4,133.7L91.1,133.7L92.2,134.3L92.7,135.1L93.1,136.9L93.1,138.2L92.7,140.1L92.0,141.1L91.2,141.4L90.3,141.4L89.2,140.8L88.8,140.2L88.4,138.3L88.4,136.8L88.8,135.0L89.5,134.0ZM79.5,132.4L79.1,133.0L79.5,133.6L83.2,133.8L81.5,136.0L81.3,136.5L81.7,137.1L83.1,137.2L83.7,137.5L84.1,137.8L84.4,138.7L84.4,139.4L84.1,140.3L83.3,141.1L82.4,141.4L81.2,141.4L80.3,141.1L79.9,140.7L79.6,140.0L79.0,139.7L78.4,140.1L78.3,140.7L79.3,142.2L80.9,142.8L82.7,142.8L84.3,142.2L85.3,141.0L85.8,139.5L85.8,138.6L85.3,137.2L84.5,136.3L83.5,135.8L85.2,133.5L85.2,132.7L84.6,132.3ZM61.1,132.3L59.6,132.8L58.4,133.9L58.2,134.4L58.3,135.6L58.7,136.4L59.5,137.2L63.5,138.6L64.3,139.6L64.3,140.5L63.7,141.1L62.8,141.4L61.1,141.4L60.2,141.1L59.4,140.3L58.9,140.1L58.6,140.2L58.2,140.8L58.4,141.3L59.7,142.4L60.9,142.8L63.1,142.8L64.3,142.4L65.5,141.3L65.7,140.8L65.6,139.0L65.1,138.1L64.4,137.6L64.5,137.6L60.4,136.1L59.8,135.5L59.6,134.7L60.3,134.0L61.2,133.7L62.7,133.7L63.6,134.0L64.4,134.8L65.0,135.1L65.3,135.0L65.7,134.4L65.5,133.9L64.2,132.7L62.8,132.3ZM55.6,132.8L54.1,132.3L50.2,132.3L49.6,132.7L49.5,142.1L49.9,142.7L50.5,142.7L50.9,142.1L51.0,138.4L54.4,138.4L55.6,138.0L56.4,137.5L57.0,136.1L57.0,134.8L56.4,133.4ZM50.9,133.8L54.0,133.7L54.9,134.0L55.6,134.9L55.6,136.0L55.3,136.6L54.2,137.1L51.0,137.1ZM48.3,132.4L42.3,132.3L41.7,132.7L41.6,142.1L42.0,142.7L42.6,142.7L43.0,142.1L43.0,138.1L46.1,137.9L46.5,137.4L46.4,137.1L45.8,136.7L43.0,136.6L43.0,133.8L48.0,133.7L48.3,133.6L48.7,133.0Z" fill="#fbf7ef" fill-rule="evenodd"/>
</svg>
<div id="pane"></div>
<div id="seg">
  <div class="sep" style="left:54px"></div>
  <div class="sep" style="left:91px"></div>
  <div class="sep" style="left:143px"></div>
</div>
<div class="t" style="left:555.5px;top:34.9px;font-size:9.35px">Detection</div>
<div class="t" style="left:612.3px;top:34.9px;font-size:9.35px">Alert</div>
<div class="t" style="left:649.7px;top:34.9px;font-size:9.35px">Camera</div>
<div class="t" style="left:699.4px;top:34.9px;font-size:9.35px">Application</div>
<div class="t" style="left:542.6px;top:53px;font-size:8.3px;color:#dedede">Face Detection Model</div>
<div class="gbox" style="left:538px;top:63px;width:227px;height:61px"></div>
<div class="t r" style="right:130.3px;top:77.6px;font-size:9.35px">Model Type:</div>
<div class="abs" style="left:678px;top:75px;width:52px;height:14px;background:#575757;border-radius:4px"></div>
<div class="t" style="left:683.6px;top:77.0px;font-size:9.45px;color:#ececec">yunet</div>
<svg class="abs" style="left:718px;top:75px" width="10" height="14" viewBox="0 0 10 14"><path d="M2.9,6 L5,3.9 L7.1,6 M2.9,8.2 L5,10.3 L7.1,8.2" fill="none" stroke="#e4e4e4" stroke-width="1.3"/></svg>
<div class="t r" style="right:130.3px;top:100.8px;font-size:9.4px">Confidence Threshold:</div>
<div class="fld" style="left:678px;top:101px;width:18px;height:10px"></div>
<div class="t" style="left:678px;top:100.5px;font-size:10px;color:#eeeeee;transform:scaleX(0.94);transform-origin:0 0">0.75</div>
<div class="spin" style="left:698px;top:99px"><svg width="9" height="14" viewBox="0 0 9 14"><path d="M1.8,5.4 L4.5,2.7 L7.2,5.4 M1.8,8.6 L4.5,11.3 L7.2,8.6" fill="none" stroke="#dedede" stroke-width="1.3"/></svg></div>
<div class="t" style="left:542.6px;top:127px;font-size:8.35px;color:#dedede">Alert Threshold</div>
<div class="gbox" style="left:538px;top:137px;width:227px;height:80px"></div>
<div class="t r" style="right:118.7px;top:149.7px;font-size:9.3px">Face Count Threshold:</div>
<div class="fld" style="left:689px;top:149px;width:10px;height:11px"></div>
<div class="t" style="left:688.6px;top:149.6px;font-size:10px;color:#eeeeee;transform:scaleX(0.94);transform-origin:0 0">1</div>
<div class="spin" style="left:701px;top:148px"><svg width="9" height="14" viewBox="0 0 9 14"><path d="M1.8,5.4 L4.5,2.7 L7.2,5.4 M1.8,8.6 L4.5,11.3 L7.2,8.6" fill="none" stroke="#dedede" stroke-width="1.3"/></svg></div>
<div class="t r" style="right:118.7px;top:171.5px;font-size:9.45px">Debounce Time (s):</div>
<div class="fld" style="left:689px;top:170px;width:15px;height:11px"></div>
<div class="t" style="left:688.8px;top:170.9px;font-size:10px;color:#eeeeee;transform:scaleX(0.94);transform-origin:0 0">1.0</div>
<div class="spin" style="left:705px;top:169px"><svg width="9" height="14" viewBox="0 0 9 14"><path d="M1.8,5.4 L4.5,2.7 L7.2,5.4 M1.8,8.6 L4.5,11.3 L7.2,8.6" fill="none" stroke="#dedede" stroke-width="1.3"/></svg></div>
<div class="t r" style="right:118.7px;top:193.2px;font-size:9.5px">Detection Delay (s):</div>
<div class="fld" style="left:689px;top:192px;width:20px;height:11px"></div>
<div class="t" style="left:688.8px;top:192.6px;font-size:10px;color:#eeeeee;transform:scaleX(0.94);transform-origin:0 0">0.20</div>
<div class="spin" style="left:711px;top:191px"><svg width="9" height="14" viewBox="0 0 9 14"><path d="M1.8,5.4 L4.5,2.7 L7.2,5.4 M1.8,8.6 L4.5,11.3 L7.2,8.6" fill="none" stroke="#dedede" stroke-width="1.3"/></svg></div>
<div class="btn" style="left:25px;top:423px;width:87px"></div>
<div class="t" style="left:35px;top:423.9px;font-size:9.35px;color:#e6e6e6">Stop Monitoring</div>
<div class="btn" style="left:431px;top:423px;width:59px"></div>
<div class="t" style="left:440.5px;top:423.9px;font-size:9.35px;color:#e6e6e6">Snapshot</div>
<div class="btn" style="left:527px;top:423px;width:91px"></div>
<div class="t" style="left:536.5px;top:423.9px;font-size:9.35px;color:#e6e6e6">Reset to Defaults</div>
<div class="btn" style="left:732px;top:423px;width:44px"></div>
<div class="t" style="left:742px;top:423.9px;font-size:9.35px;color:#e6e6e6">Apply</div>
<div id="status"></div>
<div class="t" style="left:4.6px;top:463.5px;font-size:9.1px;color:#e0e0e0">Alerts: 3 | Session: 1m 15s</div>
</body></html>
